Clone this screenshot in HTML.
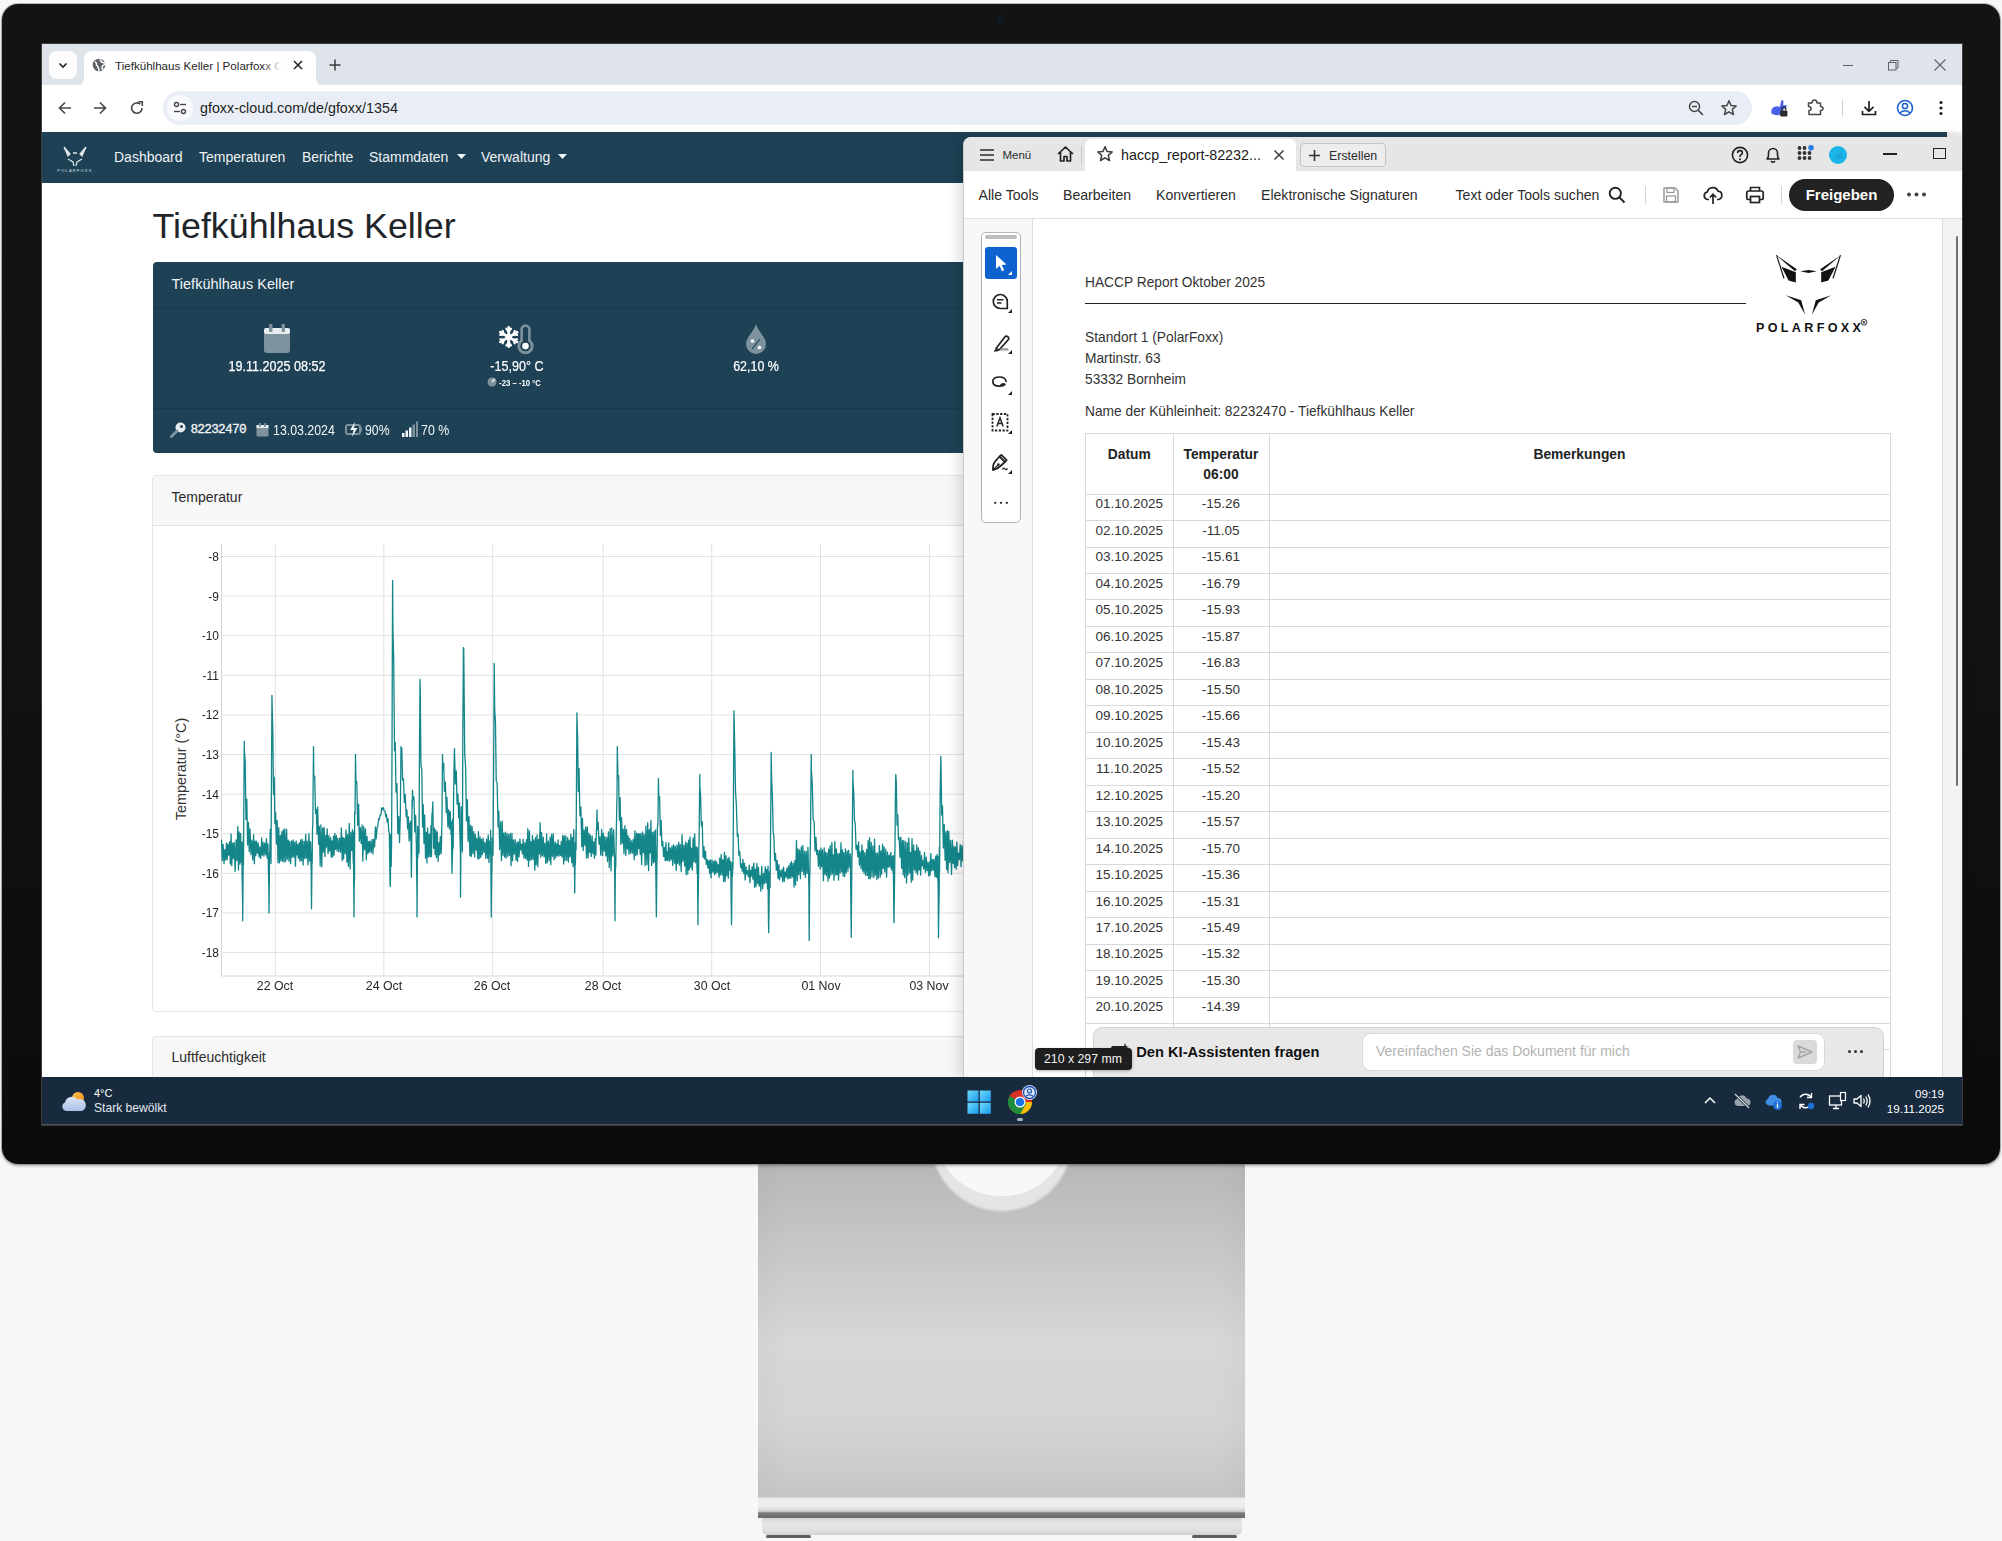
<!DOCTYPE html><html><head><meta charset="utf-8"><style>
html,body{margin:0;padding:0;}
body{width:2002px;height:1541px;position:relative;overflow:hidden;background:#f7f7f7;font-family:"Liberation Sans", sans-serif;}
.r{position:absolute;}
.t{position:absolute;white-space:nowrap;}
</style></head><body><div class="r" style="left:758px;top:1150px;width:487px;height:350px;background:linear-gradient(180deg,#b4b5b6 0%,#c4c5c6 25%,#d6d7d8 55%,#d3d4d5 78%,#c4c5c6 100%);"></div><div class="r" style="left:758px;top:1150px;width:487px;height:350px;background:linear-gradient(90deg,rgba(0,0,0,0.025) 0%,rgba(0,0,0,0) 6%,rgba(0,0,0,0) 94%,rgba(0,0,0,0.025) 100%);"></div><div class="r" style="left:930.5px;top:1069.5px;width:141px;height:141px;border-radius:50%;background:radial-gradient(circle at 50% 45%, #e9e9e9 0%, #e4e4e4 80%, #d2d3d4 96%, rgba(200,200,200,0) 100%);filter:blur(1.2px);"></div><div class="r" style="left:934.2px;top:1061.6px;width:134.8px;height:134.8px;border-radius:50%;background:#f8f8f8;filter:blur(0.7px);"></div><div class="r" style="left:758.00px;top:1497.00px;width:487.00px;height:20.50px;background:linear-gradient(180deg,#d6d7d8 0%,#eeeff0 12%,#eceded 45%,#d0d1d2 68%,#7a7b7c 76%,#6a6b6d 100%);"></div><div class="r" style="left:761.50px;top:1517.50px;width:480.00px;height:17.50px;background:linear-gradient(180deg,#d4d5d6 0%,#e6e7e8 35%,#dcdddf 80%,#cfd0d1 100%);border-radius:0 0 5px 5px;"></div><div class="r" style="left:766.00px;top:1534.50px;width:45.00px;height:3.00px;background:#5e5e5e;border-radius:2px;filter:blur(0.4px);"></div><div class="r" style="left:1192.00px;top:1534.50px;width:45.00px;height:3.00px;background:#5e5e5e;border-radius:2px;filter:blur(0.4px);"></div><div class="r" style="left:2px;top:4px;width:1998px;height:1160px;border-radius:16px;background:linear-gradient(180deg,#131313 0%,#111 60%,#0b0b0b 100%);box-shadow:0 0 0 1px rgba(120,120,120,0.5), 0 2px 3px rgba(0,0,0,0.3);"></div><div class="r" style="left:997px;top:15px;width:8px;height:8px;border-radius:50%;background:#0f1a22;"></div><div class="r" style="left:42.00px;top:44.00px;width:1920.00px;height:1081.00px;background:#fff;box-shadow:0 0 0 1px rgba(80,80,80,0.7);"></div><div class="r" style="left:42.00px;top:44.00px;width:1920.00px;height:42.00px;background:#dfe3ea;"></div><div class="r" style="left:49.00px;top:51.00px;width:28.00px;height:28.00px;background:#fdfdfe;border-radius:8px;"></div><svg class="r" style="left:57.00px;top:59.00px;" width="12" height="12" viewBox="0 0 12 12"><path d="M2.5 4.5 L6 8 L9.5 4.5" fill="none" stroke="#1f1f1f" stroke-width="1.6"/></svg><svg class="r" style="left:76px;top:50px;" width="250" height="36" viewBox="0 0 250 36"><path d="M0 36 Q8 36 8 28 L8 10 Q8 1 17 1 L231 1 Q240 1 240 10 L240 28 Q240 36 248 36 Z" fill="#fff"/></svg><svg class="r" style="left:92.00px;top:58.00px;" width="14" height="14" viewBox="0 0 14 14"><circle cx="7" cy="7" r="6.3" fill="#5f6368"/><path d="M3 3.5 Q5 5 4.5 7 Q6 8 6.5 10.5 Q7.5 12 6.5 13 M8.5 1.2 Q8 3 10 4 Q12.5 4.5 12.8 6.5 Q10.5 7 10 9.5 Q9.5 11.5 11.5 11" fill="none" stroke="#fff" stroke-width="1.5"/></svg><div class="t" style="left:115.00px;top:60.18px;width:172px;font-size:11.6px;line-height:11.6px;color:#1f1f1f;font-weight:400;text-align:left;font-family:'Liberation Sans', sans-serif;overflow:hidden;">Tiefkühlhaus Keller | Polarfoxx Cloud</div><div class="r" style="left:262.00px;top:52.00px;width:25.00px;height:28.00px;background:linear-gradient(90deg,rgba(255,255,255,0),#fff 80%);"></div><svg class="r" style="left:292.00px;top:59.00px;" width="12" height="12" viewBox="0 0 12 12"><path d="M2 2 L10 10 M10 2 L2 10" stroke="#1f1f1f" stroke-width="1.5"/></svg><svg class="r" style="left:328.00px;top:58.00px;" width="14" height="14" viewBox="0 0 14 14"><path d="M7 1.5 V12.5 M1.5 7 H12.5" stroke="#3c3c3c" stroke-width="1.5"/></svg><div class="r" style="left:1843.00px;top:64.50px;width:10.00px;height:1.00px;background:#5f6368;"></div><svg class="r" style="left:1887.00px;top:59.00px;" width="13" height="13" viewBox="0 0 13 13"><rect x="1.5" y="3.5" width="7.5" height="7.5" fill="none" stroke="#5f6368" stroke-width="1"/><path d="M3.5 3.5 V1.5 H11 V9 H9" fill="none" stroke="#5f6368" stroke-width="1"/></svg><svg class="r" style="left:1933.00px;top:58.00px;" width="14" height="14" viewBox="0 0 14 14"><path d="M1.5 1.5 L12.5 12.5 M12.5 1.5 L1.5 12.5" stroke="#5f6368" stroke-width="1.1"/></svg><div class="r" style="left:42.00px;top:85.00px;width:1920.00px;height:47.00px;background:#fff;"></div><svg class="r" style="left:57.00px;top:100.00px;" width="16" height="16" viewBox="0 0 16 16"><path d="M14 8 H2.5 M8 2.5 L2.5 8 L8 13.5" fill="none" stroke="#474747" stroke-width="1.6"/></svg><svg class="r" style="left:92.00px;top:100.00px;" width="16" height="16" viewBox="0 0 16 16"><path d="M2 8 H13.5 M8 2.5 L13.5 8 L8 13.5" fill="none" stroke="#474747" stroke-width="1.6"/></svg><svg class="r" style="left:129.00px;top:100.00px;" width="16" height="16" viewBox="0 0 16 16"><path d="M13 8 A5.2 5.2 0 1 1 11.3 4.2" fill="none" stroke="#474747" stroke-width="1.6"/><path d="M9.2 1.8 H13.3 V5.9" fill="none" stroke="#474747" stroke-width="1.6"/></svg><div class="r" style="left:163.00px;top:91.00px;width:1589.00px;height:34.00px;background:#e9eef6;border-radius:17px;"></div><div class="r" style="left:167.00px;top:95.00px;width:26.00px;height:26.00px;background:#f8fafd;border-radius:13px;"></div><svg class="r" style="left:172.00px;top:100.00px;" width="16" height="16" viewBox="0 0 16 16"><circle cx="4.5" cy="4.5" r="2" fill="none" stroke="#474747" stroke-width="1.4"/><path d="M8 4.5 H14" stroke="#474747" stroke-width="1.4"/><circle cx="11.5" cy="11.5" r="2" fill="none" stroke="#474747" stroke-width="1.4"/><path d="M2 11.5 H8" stroke="#474747" stroke-width="1.4"/></svg><div class="t" style="left:200.00px;top:100.89px;width:800px;font-size:14.3px;line-height:14.3px;color:#1f1f1f;font-weight:400;text-align:left;font-family:'Liberation Sans', sans-serif;">gfoxx-cloud.com/de/gfoxx/1354</div><svg class="r" style="left:1688.00px;top:100.00px;" width="17" height="17" viewBox="0 0 17 17"><circle cx="6.5" cy="6.5" r="5" fill="none" stroke="#474747" stroke-width="1.5"/><path d="M4 6.5 H9" stroke="#474747" stroke-width="1.5"/><path d="M10.3 10.3 L15 15" stroke="#474747" stroke-width="1.7"/></svg><svg class="r" style="left:1720.00px;top:99.00px;" width="18" height="18" viewBox="0 0 18 18"><path d="M9 1.8 L11.1 6.6 L16.2 7 L12.3 10.4 L13.5 15.5 L9 12.8 L4.5 15.5 L5.7 10.4 L1.8 7 L6.9 6.6 Z" fill="none" stroke="#474747" stroke-width="1.5" stroke-linejoin="round"/></svg><svg class="r" style="left:1769.00px;top:98.00px;" width="20" height="20" viewBox="0 0 20 20"><path d="M2.5 15.5 Q1.5 10.5 5.5 8.8 Q8.5 7.6 10.8 9 L12.2 3.2 Q13.2 1.2 14.4 2.8 L14.3 7.6 Q17.2 6 18 8.2 Q16.8 10.2 14.3 11.2 Q14.8 14.5 11.5 16.5 Q7 18.5 2.5 15.5 Z" fill="#4a63e6"/><rect x="11.2" y="12.6" width="7.2" height="5.8" rx="1" fill="#2b2b2b"/><path d="M12.8 12.6 V11.2 A2 2 0 0 1 16.8 11.2 V12.6" fill="none" stroke="#2b2b2b" stroke-width="1.3"/></svg><svg class="r" style="left:1806.00px;top:98.00px;" width="19" height="19" viewBox="0 0 19 19"><path d="M2.5 5 H6 Q6 2 8.5 2 Q11 2 11 5 H14.5 V8.5 Q17 8.5 17 10.5 Q17 12.5 14.5 12.5 V16.5 H3 V12.5 Q5 12.5 5 10.5 Q5 8.5 2.5 8.5 Z" fill="none" stroke="#474747" stroke-width="1.5" stroke-linejoin="round"/></svg><div class="r" style="left:1841.50px;top:100.00px;width:1.00px;height:16.00px;background:#c7d0dc;"></div><svg class="r" style="left:1860.00px;top:99.00px;" width="18" height="18" viewBox="0 0 18 18"><path d="M9 2 V12 M4.5 7.8 L9 12.3 L13.5 7.8" fill="none" stroke="#1f1f1f" stroke-width="1.7"/><path d="M2.5 12 V15.5 H15.5 V12" fill="none" stroke="#1f1f1f" stroke-width="1.7"/></svg><svg class="r" style="left:1896.00px;top:99.00px;" width="18" height="18" viewBox="0 0 18 18"><circle cx="9" cy="9" r="7.5" fill="none" stroke="#1a5fd0" stroke-width="1.6"/><circle cx="9" cy="7" r="2.6" fill="none" stroke="#1a5fd0" stroke-width="1.5"/><path d="M4 13.8 Q9 9.8 14 13.8" fill="none" stroke="#1a5fd0" stroke-width="1.5"/></svg><svg class="r" style="left:1937.00px;top:99.00px;" width="8" height="18" viewBox="0 0 8 18"><circle cx="4" cy="3.5" r="1.6" fill="#1f1f1f"/><circle cx="4" cy="9" r="1.6" fill="#1f1f1f"/><circle cx="4" cy="14.5" r="1.6" fill="#1f1f1f"/></svg><div class="r" style="left:42.00px;top:132.00px;width:1920.00px;height:945.00px;background:#fff;"></div><div class="r" style="left:1947.00px;top:132.00px;width:15.00px;height:945.00px;background:#f1f1f1;"></div><div class="r" style="left:42.00px;top:132.00px;width:1905.00px;height:51.00px;background:#1e4155;"></div><svg class="r" style="left:57.00px;top:145.00px;" width="36" height="28" viewBox="0 0 36 28"><g fill="none" stroke="#dfe7ec" stroke-width="1.2">
<path d="M7 2 L13 9 L11 11 Z" fill="#dfe7ec"/><path d="M29 2 L23 9 L25 11 Z" fill="#dfe7ec"/>
<path d="M16 8 H20" stroke-width="1.5"/>
<path d="M11 14 L16 17 L17 21" /><path d="M25 14 L20 17 L19 21"/>
</g><text x="18" y="26.5" font-size="4" fill="#dfe7ec" text-anchor="middle" font-family="Liberation Sans" letter-spacing="1.2">POLARFOXX</text></svg><div class="t" style="left:114.00px;top:150.15px;width:800px;font-size:14px;line-height:14px;color:#eef3f6;font-weight:400;text-align:left;font-family:'Liberation Sans', sans-serif;">Dashboard</div><div class="t" style="left:199.00px;top:150.15px;width:800px;font-size:14px;line-height:14px;color:#eef3f6;font-weight:400;text-align:left;font-family:'Liberation Sans', sans-serif;">Temperaturen</div><div class="t" style="left:302.00px;top:150.15px;width:800px;font-size:14px;line-height:14px;color:#eef3f6;font-weight:400;text-align:left;font-family:'Liberation Sans', sans-serif;">Berichte</div><div class="t" style="left:369.00px;top:150.15px;width:800px;font-size:14px;line-height:14px;color:#eef3f6;font-weight:400;text-align:left;font-family:'Liberation Sans', sans-serif;">Stammdaten</div><svg class="r" style="left:457.00px;top:154.00px;" width="9" height="5" viewBox="0 0 9 5"><path d="M0 0 H9 L4.5 5 Z" fill="#eef3f6"/></svg><div class="t" style="left:481.00px;top:150.15px;width:800px;font-size:14px;line-height:14px;color:#eef3f6;font-weight:400;text-align:left;font-family:'Liberation Sans', sans-serif;">Verwaltung</div><svg class="r" style="left:558.00px;top:154.00px;" width="9" height="5" viewBox="0 0 9 5"><path d="M0 0 H9 L4.5 5 Z" fill="#eef3f6"/></svg><div class="t" style="left:152.50px;top:209.19px;width:800px;font-size:35.8px;line-height:35.8px;color:#212529;font-weight:400;text-align:left;font-family:'Liberation Sans', sans-serif;">Tiefkühlhaus Keller</div><div class="r" style="left:152.50px;top:262.00px;width:840.00px;height:190.50px;background:#1e4155;border-radius:4px;"></div><div class="t" style="left:171.50px;top:276.72px;width:800px;font-size:14.5px;line-height:14.5px;color:#f2f5f7;font-weight:400;text-align:left;font-family:'Liberation Sans', sans-serif;">Tiefkühlhaus Keller</div><div class="r" style="left:152.50px;top:306.50px;width:840.00px;height:1.00px;background:#1a394b;"></div><div class="r" style="left:152.50px;top:407.50px;width:840.00px;height:1.00px;background:#1a394b;"></div><svg class="r" style="left:263.00px;top:323.00px;" width="28" height="31" viewBox="0 0 28 31"><rect x="1" y="5" width="26" height="25" rx="3" fill="#7e929e"/><rect x="1" y="5" width="26" height="6" rx="2" fill="#e8edf0"/><rect x="6" y="1" width="3.5" height="8" rx="1" fill="#7e929e"/><rect x="18.5" y="1" width="3.5" height="8" rx="1" fill="#7e929e"/></svg><div class="t" style="left:177.30px;top:359.15px;width:200px;font-size:14px;line-height:14px;color:#ffffff;font-weight:400;text-align:center;font-family:'Liberation Sans', sans-serif;-webkit-text-stroke:0.25px #fff;transform:scaleX(0.898);transform-origin:50% 50%;">19.11.2025 08:52</div><svg class="r" style="left:498.00px;top:323.00px;" width="37" height="33" viewBox="0 0 37 33"><path d="M10.70 14.10 L10.70 4.50" stroke="#fff" stroke-width="2.8" stroke-linecap="round"/><path d="M10.70 8.53 L8.39 5.77" stroke="#fff" stroke-width="2.2" stroke-linecap="round"/><path d="M10.70 8.53 L13.01 5.77" stroke="#fff" stroke-width="2.2" stroke-linecap="round"/><path d="M10.70 14.10 L2.39 9.30" stroke="#fff" stroke-width="2.8" stroke-linecap="round"/><path d="M5.88 11.32 L2.33 11.94" stroke="#fff" stroke-width="2.2" stroke-linecap="round"/><path d="M5.88 11.32 L4.65 7.93" stroke="#fff" stroke-width="2.2" stroke-linecap="round"/><path d="M10.70 14.10 L2.39 18.90" stroke="#fff" stroke-width="2.8" stroke-linecap="round"/><path d="M5.88 16.88 L4.65 20.27" stroke="#fff" stroke-width="2.2" stroke-linecap="round"/><path d="M5.88 16.88 L2.33 16.26" stroke="#fff" stroke-width="2.2" stroke-linecap="round"/><path d="M10.70 14.10 L10.70 23.70" stroke="#fff" stroke-width="2.8" stroke-linecap="round"/><path d="M10.70 19.67 L13.01 22.43" stroke="#fff" stroke-width="2.2" stroke-linecap="round"/><path d="M10.70 19.67 L8.39 22.43" stroke="#fff" stroke-width="2.2" stroke-linecap="round"/><path d="M10.70 14.10 L19.01 18.90" stroke="#fff" stroke-width="2.8" stroke-linecap="round"/><path d="M15.52 16.88 L19.07 16.26" stroke="#fff" stroke-width="2.2" stroke-linecap="round"/><path d="M15.52 16.88 L16.75 20.27" stroke="#fff" stroke-width="2.2" stroke-linecap="round"/><path d="M10.70 14.10 L19.01 9.30" stroke="#fff" stroke-width="2.8" stroke-linecap="round"/><path d="M15.52 11.32 L16.75 7.93" stroke="#fff" stroke-width="2.2" stroke-linecap="round"/><path d="M15.52 11.32 L19.07 11.94" stroke="#fff" stroke-width="2.2" stroke-linecap="round"/><circle cx="10.7" cy="14.1" r="3.2" fill="#fff"/><path d="M22.3 6.5 A5.2 5.2 0 0 1 32.7 6.5 V17 A8.1 8.1 0 1 1 22.3 17 Z" fill="#7e929e"/><path d="M24.9 6.5 A2.6 2.6 0 0 1 30.1 6.5 V18.6 A5.2 5.2 0 1 1 24.9 18.6 Z" fill="#1e4155"/><circle cx="27.5" cy="23.1" r="3.3" fill="#fff"/></svg><div class="t" style="left:416.50px;top:359.15px;width:200px;font-size:14px;line-height:14px;color:#ffffff;font-weight:400;text-align:center;font-family:'Liberation Sans', sans-serif;-webkit-text-stroke:0.2px #fff;transform:scaleX(0.9);transform-origin:50% 50%;">-15,90° C</div><svg class="r" style="left:487.00px;top:377.00px;" width="10" height="10" viewBox="0 0 10 10"><circle cx="5" cy="5" r="4.5" fill="#7e929e"/><path d="M5 5 L8 2" stroke="#fff" stroke-width="1.2"/></svg><div class="t" style="left:469.80px;top:378.55px;width:100px;font-size:8.8px;line-height:8.8px;color:#ffffff;font-weight:700;text-align:center;font-family:'Liberation Sans', sans-serif;transform:scaleX(0.88);transform-origin:50% 50%;">-23 – -10 °C</div><svg class="r" style="left:745.00px;top:323.00px;" width="22" height="31" viewBox="0 0 22 31"><path d="M11 1 Q12 5 18 13 Q21 17 21 21 A10 10 0 0 1 1 21 Q1 17 4 13 Q10 5 11 1 Z" fill="#7e929e"/><circle cx="7.5" cy="18" r="1.8" fill="#fff"/><circle cx="14.5" cy="24.5" r="1.8" fill="#fff"/><path d="M15 16 L7 26" stroke="#1e4155" stroke-width="1.2"/></svg><div class="t" style="left:656.00px;top:359.15px;width:200px;font-size:14px;line-height:14px;color:#ffffff;font-weight:400;text-align:center;font-family:'Liberation Sans', sans-serif;-webkit-text-stroke:0.2px #fff;transform:scaleX(0.89);transform-origin:50% 50%;">62,10 %</div><svg class="r" style="left:170.00px;top:422.00px;" width="16" height="16" viewBox="0 0 16 16"><circle cx="10.5" cy="5.5" r="5" fill="#e6ebee"/><circle cx="11.5" cy="4.5" r="1.5" fill="#1e4155"/><path d="M7 9 L1.5 14.5" stroke="#7e929e" stroke-width="3" stroke-linecap="round"/></svg><div class="t" style="left:190.40px;top:424.16px;width:800px;font-size:12.8px;line-height:12.8px;color:#f2f5f7;font-weight:400;text-align:left;font-family:'Liberation Mono', monospace;letter-spacing:-0.75px;-webkit-text-stroke:0.3px #f2f5f7;">82232470</div><svg class="r" style="left:256.00px;top:423.00px;" width="13" height="14" viewBox="0 0 13 14"><rect x="0.5" y="2" width="12" height="11.5" rx="1.5" fill="#7e929e"/><rect x="0.5" y="2" width="12" height="3" fill="#e6ebee"/><rect x="3" y="0" width="1.8" height="4" fill="#7e929e"/><rect x="8.2" y="0" width="1.8" height="4" fill="#7e929e"/></svg><div class="t" style="left:272.50px;top:423.15px;width:800px;font-size:14px;line-height:14px;color:#f2f5f7;font-weight:400;text-align:left;font-family:'Liberation Sans', sans-serif;transform:scaleX(0.883);transform-origin:0 50%;">13.03.2024</div><svg class="r" style="left:345.00px;top:422.00px;" width="18" height="15" viewBox="0 0 18 15"><rect x="1" y="3" width="14" height="9" rx="2" fill="none" stroke="#7e929e" stroke-width="2"/><rect x="15" y="5.5" width="2" height="4" fill="#7e929e"/><path d="M10 0 L5 8 H8.5 L7 15 L12.5 6 H9 Z" fill="#f2f5f7"/></svg><div class="t" style="left:365.20px;top:423.15px;width:800px;font-size:14px;line-height:14px;color:#f2f5f7;font-weight:400;text-align:left;font-family:'Liberation Sans', sans-serif;transform:scaleX(0.877);transform-origin:0 50%;">90%</div><svg class="r" style="left:401.00px;top:421.00px;" width="17" height="16" viewBox="0 0 17 16"><rect x="1" y="12" width="2.5" height="4" fill="#f2f5f7"/><rect x="4.5" y="9.5" width="2.5" height="6.5" fill="#f2f5f7"/><rect x="8" y="6.5" width="2.5" height="9.5" fill="#f2f5f7"/><rect x="11.5" y="3.5" width="2.5" height="12.5" fill="#7e929e"/><rect x="15" y="0.5" width="2" height="15.5" fill="#7e929e"/></svg><div class="t" style="left:421.10px;top:423.15px;width:800px;font-size:14px;line-height:14px;color:#f2f5f7;font-weight:400;text-align:left;font-family:'Liberation Sans', sans-serif;transform:scaleX(0.883);transform-origin:0 50%;">70 %</div><div class="r" style="left:152.00px;top:475.00px;width:840.00px;height:537.00px;background:#fff;border:1px solid #e3e3e3;border-radius:4px;box-sizing:border-box;"></div><div class="r" style="left:153.00px;top:476.00px;width:838.00px;height:49.50px;background:#f7f7f7;border-bottom:1px solid #e3e3e3;border-radius:4px 4px 0 0;box-sizing:border-box;"></div><div class="t" style="left:171.50px;top:490.15px;width:800px;font-size:14px;line-height:14px;color:#2b2b2b;font-weight:400;text-align:left;font-family:'Liberation Sans', sans-serif;">Temperatur</div><div class="r" style="left:152.00px;top:1035.50px;width:840.00px;height:60.00px;background:#f7f7f7;border:1px solid #e3e3e3;border-radius:4px;box-sizing:border-box;"></div><div class="t" style="left:171.50px;top:1050.15px;width:800px;font-size:14px;line-height:14px;color:#2b2b2b;font-weight:400;text-align:left;font-family:'Liberation Sans', sans-serif;">Luftfeuchtigkeit</div><svg class="r" style="left:0;top:0;" width="2002" height="1100" viewBox="0 0 2002 1100"><defs><clipPath id="cc"><rect x="221" y="530" width="742.5" height="460"/></clipPath></defs><g clip-path="url(#cc)"><path d="M221.5 556.5 H963.5" stroke="#e2e2e2" stroke-width="1"/><path d="M221.5 596.1 H963.5" stroke="#e2e2e2" stroke-width="1"/><path d="M221.5 635.7 H963.5" stroke="#e2e2e2" stroke-width="1"/><path d="M221.5 675.3 H963.5" stroke="#e2e2e2" stroke-width="1"/><path d="M221.5 714.9 H963.5" stroke="#e2e2e2" stroke-width="1"/><path d="M221.5 754.5 H963.5" stroke="#e2e2e2" stroke-width="1"/><path d="M221.5 794.1 H963.5" stroke="#e2e2e2" stroke-width="1"/><path d="M221.5 833.7 H963.5" stroke="#e2e2e2" stroke-width="1"/><path d="M221.5 873.3 H963.5" stroke="#e2e2e2" stroke-width="1"/><path d="M221.5 912.9 H963.5" stroke="#e2e2e2" stroke-width="1"/><path d="M221.5 952.5 H963.5" stroke="#e2e2e2" stroke-width="1"/><path d="M275.4 544 V976" stroke="#e2e2e2" stroke-width="1"/><path d="M383.8 544 V976" stroke="#e2e2e2" stroke-width="1"/><path d="M492.4 544 V976" stroke="#e2e2e2" stroke-width="1"/><path d="M603.2 544 V976" stroke="#e2e2e2" stroke-width="1"/><path d="M711.7 544 V976" stroke="#e2e2e2" stroke-width="1"/><path d="M820.5 544 V976" stroke="#e2e2e2" stroke-width="1"/><path d="M929.4 544 V976" stroke="#e2e2e2" stroke-width="1"/><path d="M221.5 544 V976 H963.5" stroke="#d6d6d6" stroke-width="1" fill="none"/><path d="M221.50 839.7 L222.29 860.6 L223.10 844.3 L224.03 863.5 L224.82 849.6 L225.62 859.9 L226.45 842.9 L227.15 859.7 L227.96 844.0 L228.80 855.1 L229.69 841.7 L230.36 864.1 L231.10 833.9 L231.78 865.8 L232.67 843.1 L233.53 858.5 L234.19 842.3 L235.14 871.4 L236.08 840.0 L236.93 860.6 L237.76 826.5 L238.46 870.1 L239.11 831.9 L239.92 864.3 L240.59 833.5 L241.30 862.2 L242.00 842.1 L242.02 872.4 L242.68 904.0 L242.70 920.8 L243.40 835.7 L243.47 865.2 L244.25 741.3 L244.40 750.5 L245.15 760.6 L245.96 819.5 L246.80 799.1 L247.60 845.1 L248.45 822.4 L249.23 851.7 L249.97 828.8 L250.92 854.6 L251.87 840.2 L252.77 859.9 L253.63 834.6 L254.37 863.7 L255.09 841.2 L255.83 855.7 L256.50 841.2 L257.38 853.1 L258.15 842.9 L259.06 857.2 L259.82 846.9 L260.76 858.4 L261.66 838.0 L262.31 855.2 L263.03 842.4 L263.95 856.1 L264.74 842.8 L265.68 854.7 L266.45 838.7 L267.13 858.0 L267.96 844.0 L268.30 862.6 L268.85 890.6 L269.00 912.9 L269.58 852.4 L269.70 858.8 L270.25 829.4 L271.00 863.5 L271.94 695.3 L272.00 699.1 L272.82 732.3 L273.51 794.6 L274.23 777.1 L274.91 823.8 L275.58 812.3 L276.47 844.2 L277.17 820.4 L277.99 862.6 L278.77 827.6 L279.48 862.9 L280.35 835.4 L281.04 860.7 L281.88 831.6 L282.57 861.2 L283.34 829.8 L284.06 862.0 L284.79 828.9 L285.73 861.4 L286.62 829.4 L287.36 859.2 L288.28 840.2 L288.99 861.3 L289.76 841.3 L290.67 863.7 L291.51 840.9 L292.19 857.2 L293.13 840.0 L293.85 857.0 L294.58 842.1 L295.46 866.2 L296.21 841.0 L296.95 854.8 L297.62 844.5 L298.29 858.1 L299.12 842.7 L299.84 861.1 L300.67 840.0 L301.43 860.7 L302.22 839.5 L303.16 864.9 L303.95 841.5 L304.78 858.6 L305.69 834.5 L306.39 858.3 L307.09 841.2 L308.01 864.8 L308.90 833.5 L309.63 861.0 L310.34 841.7 L310.80 855.2 L311.21 870.9 L311.50 908.9 L312.14 842.5 L312.20 863.6 L312.50 829.7 L312.85 822.9 L313.50 746.6 L313.78 775.8 L314.70 776.2 L315.53 813.3 L316.31 809.4 L316.99 834.3 L317.65 807.0 L318.59 844.3 L319.31 826.4 L320.17 865.9 L320.90 824.8 L321.80 866.8 L322.62 828.1 L323.36 852.1 L324.06 827.3 L324.93 856.6 L325.60 835.7 L326.32 847.0 L327.14 828.8 L328.04 853.6 L328.88 835.6 L329.61 851.0 L330.54 837.7 L331.25 857.2 L331.90 840.8 L332.63 856.9 L333.42 836.4 L334.09 855.0 L334.79 833.3 L335.55 849.3 L336.37 835.5 L337.06 851.0 L337.82 838.5 L338.74 851.7 L339.68 838.2 L340.53 852.1 L341.38 827.8 L342.21 860.7 L342.90 837.3 L343.56 858.8 L344.22 838.2 L345.14 853.8 L346.00 829.9 L346.94 862.3 L347.60 834.3 L348.44 866.2 L349.23 823.5 L350.10 869.0 L350.85 832.2 L351.80 850.4 L352.47 829.6 L353.28 863.3 L353.30 831.7 L354.00 916.9 L354.15 886.7 L354.50 878.2 L354.70 812.0 L355.07 814.0 L355.50 754.5 L355.95 782.7 L356.81 781.8 L357.69 825.5 L358.62 804.2 L359.37 841.2 L360.23 827.6 L361.15 843.4 L362.06 824.9 L362.84 861.1 L363.72 826.6 L364.63 849.9 L365.46 829.0 L366.29 859.8 L367.06 836.5 L367.88 853.8 L368.71 841.4 L369.39 852.1 L370.23 841.2 L371.18 852.7 L372.09 839.3 L372.96 853.9 L373.73 839.3 L374.60 846.9 L375.42 826.9 L376.20 838.9 L377.11 827.4 L377.78 826.3 L378.66 818.7 L379.32 819.5 L380.15 814.9 L380.94 815.0 L381.66 807.9 L382.52 809.6 L383.32 807.7 L384.15 810.6 L385.08 811.5 L385.80 817.0 L386.46 814.4 L387.20 822.0 L388.05 818.6 L388.76 831.5 L389.30 832.1 L389.46 844.5 L390.00 881.2 L390.39 886.4 L390.70 834.3 L391.23 866.3 L391.60 838.0 L392.02 749.8 L392.60 580.3 L392.93 630.0 L393.68 657.9 L394.53 750.7 L395.24 742.5 L396.02 792.0 L396.91 783.7 L397.84 833.7 L398.75 816.4 L399.52 842.6 L400.00 824.7 L400.34 816.0 L401.00 746.6 L401.09 751.9 L401.78 748.1 L402.58 780.0 L403.48 779.0 L404.38 802.7 L405.24 794.5 L406.18 816.6 L406.91 809.8 L407.61 829.0 L408.40 816.9 L409.13 841.0 L409.85 823.3 L410.62 839.3 L410.70 821.2 L411.40 877.3 L411.46 853.9 L411.50 872.5 L412.10 799.8 L412.26 807.2 L412.50 790.1 L413.00 800.2 L413.90 796.9 L414.85 831.9 L415.63 815.2 L416.30 843.0 L416.96 893.6 L417.00 916.9 L417.70 826.3 L417.88 857.5 L418.54 832.2 L419.00 853.2 L419.40 764.4 L420.00 679.3 L420.22 687.3 L420.96 765.2 L421.85 770.5 L422.51 826.9 L423.20 804.6 L423.98 843.5 L424.64 814.9 L425.54 858.2 L426.26 832.5 L426.95 862.9 L427.62 827.9 L428.46 856.8 L429.24 833.8 L430.08 857.1 L430.93 825.7 L431.50 856.6 L431.82 816.8 L432.50 809.9 L432.76 802.0 L433.61 848.3 L434.32 828.1 L435.11 854.5 L435.82 830.0 L436.47 857.7 L437.26 831.8 L438.13 861.4 L438.83 842.8 L439.56 854.8 L440.32 836.4 L441.18 853.7 L441.50 844.0 L441.98 818.7 L442.50 754.5 L442.82 769.5 L443.69 763.1 L444.46 791.4 L445.35 782.1 L446.27 812.7 L446.95 797.4 L447.88 826.8 L448.74 809.7 L449.43 828.9 L450.22 811.6 L451.06 834.4 L451.30 821.5 L451.98 871.4 L452.00 873.3 L452.70 847.1 L452.74 819.1 L453.20 848.2 L453.56 798.7 L454.20 758.5 L454.48 748.6 L455.37 783.9 L456.30 771.0 L457.09 804.0 L457.93 793.8 L458.64 817.9 L459.51 802.8 L459.80 832.0 L460.41 852.1 L460.50 897.1 L461.20 806.8 L461.25 839.7 L462.11 810.4 L462.40 851.8 L462.83 732.3 L463.40 647.6 L463.75 648.2 L464.69 753.4 L465.64 767.8 L466.45 820.9 L467.33 799.7 L468.08 841.5 L469.00 816.7 L469.91 855.8 L470.66 825.1 L471.34 856.6 L472.12 826.7 L472.94 853.6 L473.82 831.5 L474.61 857.0 L475.27 834.3 L476.16 849.9 L476.83 838.6 L477.72 858.9 L478.43 831.6 L479.18 858.7 L480.06 837.0 L480.75 857.4 L481.45 839.3 L482.25 854.6 L483.12 838.1 L484.02 852.5 L484.88 842.5 L485.81 858.4 L486.61 839.1 L487.55 858.2 L488.22 834.8 L488.94 862.5 L489.75 841.1 L490.48 853.8 L490.60 830.1 L491.30 916.9 L491.35 899.7 L492.00 858.1 L492.19 837.9 L493.00 855.1 L493.20 828.3 L493.90 726.4 L494.20 663.4 L494.72 710.4 L495.47 722.1 L496.23 780.6 L497.13 783.1 L498.05 826.8 L498.77 811.1 L499.67 849.5 L500.61 821.9 L501.42 860.6 L502.24 821.1 L502.95 855.3 L503.76 833.1 L504.56 856.9 L505.39 832.2 L506.05 858.2 L506.99 833.4 L507.80 856.4 L508.57 834.5 L509.46 855.4 L510.28 833.5 L511.08 865.8 L511.93 833.1 L512.60 860.8 L513.41 840.0 L514.19 854.2 L515.12 839.5 L516.05 860.1 L516.78 842.6 L517.57 861.4 L518.26 841.6 L519.04 856.6 L519.94 839.0 L520.86 850.2 L521.65 844.5 L522.40 853.9 L523.10 839.1 L523.94 858.0 L524.87 842.9 L525.56 858.4 L526.44 839.7 L527.10 860.1 L527.80 828.7 L528.52 866.6 L529.38 831.0 L530.12 860.5 L530.88 841.6 L531.72 859.6 L532.40 835.5 L533.27 859.2 L533.95 840.0 L534.76 870.3 L535.48 837.6 L536.19 864.7 L537.00 834.9 L537.78 866.7 L538.55 839.4 L539.32 853.9 L540.13 822.7 L540.83 857.2 L541.54 832.4 L542.38 855.6 L543.22 837.1 L544.03 856.8 L544.93 843.1 L545.77 863.5 L546.67 833.9 L547.39 862.7 L548.27 841.1 L549.16 860.8 L550.08 837.1 L550.82 864.8 L551.57 834.4 L552.50 856.4 L553.21 833.8 L554.16 859.7 L555.08 841.9 L555.77 857.8 L556.49 843.8 L557.36 855.5 L558.08 839.8 L558.76 856.3 L559.66 845.4 L560.44 855.4 L561.33 841.3 L562.01 856.9 L562.79 835.3 L563.64 864.1 L564.30 836.0 L565.01 860.5 L565.86 836.0 L566.78 860.4 L567.72 837.6 L568.41 862.1 L569.21 840.1 L570.09 856.9 L570.89 834.5 L571.75 862.7 L572.45 837.3 L573.12 866.6 L573.80 829.5 L574.00 857.6 L574.47 858.0 L574.70 893.1 L575.28 842.5 L575.40 864.2 L576.00 830.4 L576.09 849.8 L576.91 712.8 L577.00 718.9 L577.60 735.9 L578.31 791.4 L579.02 768.3 L579.92 815.8 L580.87 807.1 L581.79 846.4 L582.47 818.3 L583.14 850.6 L584.08 829.8 L584.87 845.3 L585.75 827.1 L586.49 858.1 L587.28 826.8 L588.09 857.8 L588.87 833.2 L589.70 852.4 L590.35 835.1 L591.21 856.4 L592.11 836.0 L592.82 853.6 L593.61 842.0 L594.48 858.3 L595.25 838.7 L595.96 855.0 L596.00 843.2 L596.66 825.9 L597.00 809.9 L597.46 829.6 L598.12 822.5 L599.03 844.1 L599.92 837.0 L600.79 855.2 L601.69 829.5 L602.53 855.7 L603.30 833.2 L604.13 851.3 L604.93 836.6 L605.88 855.9 L606.77 837.4 L607.50 861.6 L608.42 831.8 L609.30 867.6 L610.18 828.6 L611.07 870.7 L611.84 827.9 L612.76 856.0 L613.68 830.0 L614.30 851.9 L614.54 856.4 L615.00 920.8 L615.42 856.2 L615.70 868.0 L616.30 832.4 L617.07 790.6 L617.30 746.6 L617.93 777.1 L618.61 775.7 L619.36 820.0 L620.15 797.6 L620.80 844.6 L621.56 817.4 L622.40 843.3 L623.24 829.2 L623.96 853.7 L624.89 825.6 L625.74 855.6 L626.49 829.3 L627.34 849.0 L628.16 835.9 L628.97 854.1 L629.74 838.4 L630.69 853.3 L631.53 840.8 L632.39 853.1 L633.27 839.2 L634.21 859.8 L634.87 831.0 L635.70 855.6 L636.58 833.2 L637.30 854.8 L638.07 833.3 L638.74 848.6 L639.45 833.9 L640.21 854.5 L640.89 833.4 L641.61 864.7 L642.54 832.0 L643.35 852.7 L644.15 834.4 L645.09 865.8 L645.91 826.2 L646.86 864.7 L647.70 822.7 L648.60 870.7 L649.27 829.5 L650.10 853.0 L650.98 820.4 L651.64 865.4 L652.57 832.5 L653.27 863.1 L654.06 831.3 L654.76 861.9 L655.56 830.0 L655.70 863.0 L656.39 916.9 L656.40 916.9 L657.06 846.2 L657.10 858.3 L657.40 827.6 L657.99 823.1 L658.40 778.3 L658.77 795.9 L659.58 796.7 L660.41 835.7 L661.17 820.5 L661.90 845.9 L662.75 841.4 L663.57 856.4 L664.30 847.5 L665.17 860.6 L665.91 842.5 L666.56 860.4 L667.28 851.6 L667.95 860.5 L668.64 842.9 L669.52 861.2 L670.29 848.0 L671.21 859.7 L672.08 845.9 L672.74 865.5 L673.69 844.8 L674.62 863.2 L675.30 846.5 L676.22 870.3 L677.00 844.8 L677.79 863.5 L678.73 842.5 L679.46 865.2 L680.26 844.6 L681.19 871.6 L682.06 834.7 L682.85 861.4 L683.79 845.2 L684.69 866.0 L685.52 842.0 L686.21 874.8 L687.04 843.2 L687.83 873.9 L688.54 840.2 L689.21 869.8 L690.01 836.8 L690.70 867.6 L691.48 848.2 L692.34 870.2 L693.12 837.9 L693.85 861.8 L694.68 833.8 L695.45 862.6 L696.33 847.0 L697.14 873.5 L697.30 847.8 L698.00 924.8 L698.09 901.0 L698.70 867.3 L698.80 846.2 L699.03 844.8 L699.80 774.3 L699.90 787.5 L700.62 795.7 L701.30 825.8 L702.22 821.7 L703.11 857.6 L703.95 846.7 L704.70 858.9 L705.43 851.1 L706.29 864.5 L707.11 859.3 L707.94 868.0 L708.78 860.3 L709.65 873.3 L710.36 860.0 L711.08 877.9 L712.03 859.8 L712.95 872.2 L713.87 861.3 L714.53 874.8 L715.20 860.3 L715.93 873.4 L716.71 861.9 L717.54 872.1 L718.22 864.6 L719.04 877.3 L719.71 858.2 L720.38 874.9 L721.24 854.5 L722.05 874.9 L722.89 859.9 L723.65 881.6 L724.45 852.2 L725.16 881.6 L725.91 855.6 L726.79 875.9 L727.69 858.8 L728.36 878.2 L729.05 857.2 L729.94 870.4 L730.78 861.3 L730.80 872.2 L731.50 924.8 L731.66 915.1 L732.20 862.8 L732.37 876.2 L733.00 865.1 L733.15 850.3 L733.88 722.1 L734.00 710.9 L734.77 748.8 L735.53 791.7 L736.38 805.1 L737.32 836.4 L738.07 834.0 L738.88 855.3 L739.76 851.5 L740.68 867.5 L741.46 863.9 L742.22 871.2 L742.90 859.3 L743.81 873.7 L744.49 863.4 L745.16 880.0 L745.98 867.0 L746.78 874.0 L747.63 870.7 L748.37 876.6 L749.26 865.2 L749.93 882.8 L750.64 870.4 L751.49 876.0 L752.17 866.7 L752.91 879.2 L753.77 863.1 L754.63 887.4 L755.37 869.1 L756.06 886.3 L756.82 863.4 L757.69 883.4 L758.45 867.3 L759.13 886.0 L759.99 875.6 L760.81 891.2 L761.74 866.4 L762.67 888.8 L763.60 873.5 L764.38 883.6 L765.27 866.8 L766.01 882.7 L766.75 869.3 L767.52 888.8 L768.00 866.2 L768.46 921.3 L768.70 932.7 L769.37 881.7 L769.40 871.7 L770.10 887.8 L770.20 873.4 L770.86 800.7 L771.20 752.5 L771.62 779.0 L772.38 795.3 L773.14 831.1 L773.91 837.4 L774.62 860.5 L775.44 853.3 L776.33 870.2 L777.14 860.3 L778.04 878.7 L778.86 864.6 L779.56 879.8 L780.44 871.0 L781.35 876.9 L782.09 869.5 L782.74 881.8 L783.55 867.1 L784.36 881.3 L785.18 871.9 L786.12 877.2 L786.97 868.1 L787.86 878.9 L788.53 865.9 L789.34 878.2 L790.23 863.5 L790.90 878.2 L791.58 861.5 L792.45 876.9 L793.37 863.4 L794.05 887.0 L794.89 860.3 L795.58 885.1 L796.45 840.5 L797.30 880.7 L798.02 848.9 L798.74 874.5 L799.62 849.8 L800.42 878.7 L801.30 846.8 L802.07 871.6 L802.82 845.4 L803.76 874.7 L804.61 851.2 L805.41 877.4 L806.22 851.3 L807.09 873.6 L807.95 847.4 L808.50 869.2 L808.88 887.4 L809.20 940.6 L809.65 879.2 L809.90 871.7 L810.20 850.2 L810.55 832.5 L811.20 754.5 L811.40 769.4 L812.30 785.7 L813.20 820.0 L814.10 821.3 L815.01 851.1 L815.95 837.3 L816.79 854.7 L817.60 850.1 L818.46 866.3 L819.35 850.5 L820.13 869.2 L820.91 848.0 L821.60 866.8 L822.47 850.0 L823.42 880.7 L824.18 848.0 L824.88 874.0 L825.59 852.2 L826.37 875.7 L827.11 852.9 L828.05 881.2 L828.72 849.2 L829.46 878.0 L830.14 845.7 L830.99 875.0 L831.87 842.5 L832.57 873.9 L833.24 854.8 L834.03 880.2 L834.86 841.4 L835.78 875.0 L836.44 848.9 L837.12 874.5 L837.83 853.9 L838.54 880.2 L839.26 853.5 L840.13 873.0 L840.96 842.7 L841.67 871.9 L842.38 849.8 L843.11 876.1 L843.82 852.7 L844.69 876.5 L845.44 848.9 L846.25 873.0 L847.15 851.1 L847.94 871.2 L848.67 850.3 L849.58 867.2 L850.50 853.9 L850.51 870.2 L851.20 932.7 L851.26 937.2 L851.90 857.7 L852.08 857.0 L852.90 770.3 L853.01 781.3 L853.81 794.3 L854.52 821.0 L855.19 823.0 L856.12 849.3 L857.01 845.5 L857.78 856.8 L858.59 841.8 L859.39 865.1 L860.12 851.9 L861.07 868.5 L861.92 844.9 L862.64 871.0 L863.29 850.6 L864.09 873.5 L864.85 852.6 L865.74 875.3 L866.60 849.4 L867.43 875.6 L868.13 840.7 L868.83 878.8 L869.57 837.7 L870.30 878.7 L871.21 842.5 L872.02 876.8 L872.86 846.0 L873.80 877.5 L874.53 839.1 L875.35 875.2 L876.04 853.1 L876.92 879.6 L877.57 853.0 L878.47 878.0 L879.37 845.3 L880.27 877.1 L880.94 851.0 L881.67 874.1 L882.54 844.2 L883.22 868.6 L884.01 846.8 L884.80 872.1 L885.74 849.2 L886.57 877.2 L887.47 852.0 L888.21 867.2 L889.10 854.8 L889.88 867.2 L890.80 852.3 L891.48 869.9 L892.38 856.2 L893.09 872.7 L893.30 855.7 L893.90 922.8 L894.00 920.8 L894.70 867.7 L894.71 852.2 L894.80 864.9 L895.41 797.3 L895.80 774.3 L896.31 782.0 L897.05 825.2 L897.79 814.7 L898.47 839.7 L899.21 837.6 L900.00 857.3 L900.86 837.2 L901.62 868.3 L902.48 840.4 L903.16 874.9 L903.93 840.7 L904.71 877.6 L905.65 841.6 L906.55 883.0 L907.40 843.0 L908.05 874.8 L908.82 837.9 L909.68 872.8 L910.40 852.5 L911.22 882.3 L912.01 838.6 L912.66 880.1 L913.61 845.0 L914.50 870.0 L915.21 850.8 L916.05 872.4 L916.78 844.9 L917.55 874.7 L918.36 847.9 L919.10 870.0 L919.85 851.0 L920.62 875.2 L921.47 855.5 L922.19 865.8 L922.90 860.8 L923.77 869.2 L924.52 852.5 L925.45 872.3 L926.27 857.2 L927.14 870.6 L927.89 862.5 L928.79 876.0 L929.47 861.8 L930.16 875.0 L930.84 853.6 L931.69 870.6 L932.55 859.7 L933.26 870.0 L934.03 859.1 L934.93 876.6 L935.76 856.2 L936.43 877.3 L937.15 854.5 L937.85 881.1 L937.90 856.3 L938.53 937.7 L938.60 924.8 L939.30 884.3 L939.31 847.2 L939.60 871.3 L939.98 806.5 L940.60 766.4 L940.90 756.4 L941.68 815.1 L942.49 805.9 L943.33 848.0 L944.21 824.3 L945.11 860.3 L945.87 831.7 L946.62 869.5 L947.40 830.7 L948.05 872.8 L948.82 831.5 L949.68 862.5 L950.62 840.4 L951.51 874.4 L952.36 840.2 L953.19 863.6 L953.85 846.4 L954.60 867.5 L955.35 846.8 L956.20 869.2 L956.88 842.1 L957.64 865.7 L958.44 853.1 L959.33 859.5 L960.23 844.7 L961.06 866.6 L961.76 845.9 L962.64 860.7 L963.56 840.5 L964.37 862.8 L965.13 848.2 L965.93 865.0" fill="none" stroke="#14868a" stroke-width="1.3" stroke-linejoin="round"/></g></svg><div class="t" style="left:178.50px;top:550.09px;width:40px;font-size:13px;line-height:13px;color:#262626;font-weight:400;text-align:right;font-family:'Liberation Sans', sans-serif;transform:scaleX(0.92);transform-origin:100% 50%;">-8</div><div class="t" style="left:178.50px;top:589.69px;width:40px;font-size:13px;line-height:13px;color:#262626;font-weight:400;text-align:right;font-family:'Liberation Sans', sans-serif;transform:scaleX(0.92);transform-origin:100% 50%;">-9</div><div class="t" style="left:178.50px;top:629.29px;width:40px;font-size:13px;line-height:13px;color:#262626;font-weight:400;text-align:right;font-family:'Liberation Sans', sans-serif;transform:scaleX(0.92);transform-origin:100% 50%;">-10</div><div class="t" style="left:178.50px;top:668.89px;width:40px;font-size:13px;line-height:13px;color:#262626;font-weight:400;text-align:right;font-family:'Liberation Sans', sans-serif;transform:scaleX(0.92);transform-origin:100% 50%;">-11</div><div class="t" style="left:178.50px;top:708.49px;width:40px;font-size:13px;line-height:13px;color:#262626;font-weight:400;text-align:right;font-family:'Liberation Sans', sans-serif;transform:scaleX(0.92);transform-origin:100% 50%;">-12</div><div class="t" style="left:178.50px;top:748.09px;width:40px;font-size:13px;line-height:13px;color:#262626;font-weight:400;text-align:right;font-family:'Liberation Sans', sans-serif;transform:scaleX(0.92);transform-origin:100% 50%;">-13</div><div class="t" style="left:178.50px;top:787.69px;width:40px;font-size:13px;line-height:13px;color:#262626;font-weight:400;text-align:right;font-family:'Liberation Sans', sans-serif;transform:scaleX(0.92);transform-origin:100% 50%;">-14</div><div class="t" style="left:178.50px;top:827.29px;width:40px;font-size:13px;line-height:13px;color:#262626;font-weight:400;text-align:right;font-family:'Liberation Sans', sans-serif;transform:scaleX(0.92);transform-origin:100% 50%;">-15</div><div class="t" style="left:178.50px;top:866.89px;width:40px;font-size:13px;line-height:13px;color:#262626;font-weight:400;text-align:right;font-family:'Liberation Sans', sans-serif;transform:scaleX(0.92);transform-origin:100% 50%;">-16</div><div class="t" style="left:178.50px;top:906.49px;width:40px;font-size:13px;line-height:13px;color:#262626;font-weight:400;text-align:right;font-family:'Liberation Sans', sans-serif;transform:scaleX(0.92);transform-origin:100% 50%;">-17</div><div class="t" style="left:178.50px;top:946.09px;width:40px;font-size:13px;line-height:13px;color:#262626;font-weight:400;text-align:right;font-family:'Liberation Sans', sans-serif;transform:scaleX(0.92);transform-origin:100% 50%;">-18</div><div class="t" style="left:235.40px;top:979.83px;width:80px;font-size:12.6px;line-height:12.6px;color:#262626;font-weight:400;text-align:center;font-family:'Liberation Sans', sans-serif;transform:scaleX(0.98);transform-origin:50% 50%;">22 Oct</div><div class="t" style="left:343.80px;top:979.83px;width:80px;font-size:12.6px;line-height:12.6px;color:#262626;font-weight:400;text-align:center;font-family:'Liberation Sans', sans-serif;transform:scaleX(0.98);transform-origin:50% 50%;">24 Oct</div><div class="t" style="left:452.40px;top:979.83px;width:80px;font-size:12.6px;line-height:12.6px;color:#262626;font-weight:400;text-align:center;font-family:'Liberation Sans', sans-serif;transform:scaleX(0.98);transform-origin:50% 50%;">26 Oct</div><div class="t" style="left:563.20px;top:979.83px;width:80px;font-size:12.6px;line-height:12.6px;color:#262626;font-weight:400;text-align:center;font-family:'Liberation Sans', sans-serif;transform:scaleX(0.98);transform-origin:50% 50%;">28 Oct</div><div class="t" style="left:671.70px;top:979.83px;width:80px;font-size:12.6px;line-height:12.6px;color:#262626;font-weight:400;text-align:center;font-family:'Liberation Sans', sans-serif;transform:scaleX(0.98);transform-origin:50% 50%;">30 Oct</div><div class="t" style="left:780.50px;top:979.83px;width:80px;font-size:12.6px;line-height:12.6px;color:#262626;font-weight:400;text-align:center;font-family:'Liberation Sans', sans-serif;transform:scaleX(0.98);transform-origin:50% 50%;">01 Nov</div><div class="t" style="left:889.40px;top:979.83px;width:80px;font-size:12.6px;line-height:12.6px;color:#262626;font-weight:400;text-align:center;font-family:'Liberation Sans', sans-serif;transform:scaleX(0.98);transform-origin:50% 50%;">03 Nov</div><div class="t" style="left:111px;top:761px;width:140px;height:16px;font-size:14.4px;line-height:16px;color:#333;text-align:center;transform:rotate(-90deg);transform-origin:70px 8px;">Temperatur (°C)</div><div class="r" style="left:963.00px;top:137.00px;width:999.00px;height:940.00px;background:#fff;border-radius:8px 0 0 0;border-left:1px solid #c9c9c9;box-sizing:border-box;box-shadow:-4px 0 14px rgba(0,0,0,0.14);"></div><div class="r" style="left:963.50px;top:137.00px;width:998.50px;height:34.00px;background:#e6e6e6;border-radius:8px 0 0 0;"></div><svg class="r" style="left:979.00px;top:148.00px;" width="16" height="14" viewBox="0 0 16 14"><path d="M1 2 H15 M1 7 H15 M1 12 H15" stroke="#2c2c2c" stroke-width="1.6"/></svg><div class="t" style="left:1002.50px;top:150.26px;width:800px;font-size:11.5px;line-height:11.5px;color:#2c2c2c;font-weight:400;text-align:left;font-family:'Liberation Sans', sans-serif;">Menü</div><svg class="r" style="left:1056.00px;top:145.00px;" width="19" height="18" viewBox="0 0 19 18"><path d="M2 9 L9.5 2 L17 9 M4.5 7 V16 H8 V11.5 H11 V16 H14.5 V7" fill="none" stroke="#222" stroke-width="1.7" stroke-linejoin="round"/></svg><div class="r" style="left:1080.50px;top:146.00px;width:1.00px;height:18.00px;background:#c9c9c9;"></div><div class="r" style="left:1085.00px;top:139.00px;width:210.50px;height:32.00px;background:#fff;border-radius:6px 6px 0 0;"></div><svg class="r" style="left:1096.00px;top:145.00px;" width="18" height="18" viewBox="0 0 18 18"><path d="M9 1.8 L11.1 6.6 L16.2 7 L12.3 10.4 L13.5 15.5 L9 12.8 L4.5 15.5 L5.7 10.4 L1.8 7 L6.9 6.6 Z" fill="none" stroke="#3a3a3a" stroke-width="1.5" stroke-linejoin="round"/></svg><div class="t" style="left:1121.00px;top:148.39px;width:800px;font-size:14.3px;line-height:14.3px;color:#1a1a1a;font-weight:400;text-align:left;font-family:'Liberation Sans', sans-serif;">haccp_report-82232...</div><svg class="r" style="left:1273.00px;top:149.00px;" width="12" height="12" viewBox="0 0 12 12"><path d="M1.5 1.5 L10.5 10.5 M10.5 1.5 L1.5 10.5" stroke="#444" stroke-width="1.6"/></svg><div class="r" style="left:1299.50px;top:143.00px;width:86.50px;height:23.50px;background:#ededed;border:1px solid #c4c4c4;border-radius:4px;box-sizing:border-box;"></div><svg class="r" style="left:1307.50px;top:148.50px;" width="13" height="13" viewBox="0 0 13 13"><path d="M6.5 1 V12 M1 6.5 H12" stroke="#333" stroke-width="1.6"/></svg><div class="t" style="left:1329.00px;top:149.50px;width:800px;font-size:12.4px;line-height:12.4px;color:#2c2c2c;font-weight:400;text-align:left;font-family:'Liberation Sans', sans-serif;">Erstellen</div><svg class="r" style="left:1731.00px;top:146.00px;" width="18" height="18" viewBox="0 0 18 18"><circle cx="9" cy="9" r="7.6" fill="none" stroke="#222" stroke-width="1.6"/><path d="M6.6 7 Q6.6 4.6 9 4.6 Q11.4 4.6 11.4 6.8 Q11.4 8.3 9.4 9.2 Q9 9.5 9 11" fill="none" stroke="#222" stroke-width="1.6"/><circle cx="9" cy="13.3" r="1" fill="#222"/></svg><svg class="r" style="left:1764.00px;top:145.00px;" width="18" height="19" viewBox="0 0 18 19"><path d="M3 14 Q4.5 12.5 4.5 10 V8 A4.5 4.5 0 0 1 13.5 8 V10 Q13.5 12.5 15 14 Z" fill="none" stroke="#222" stroke-width="1.6" stroke-linejoin="round"/><path d="M7 16 Q9 18.5 11 16" fill="none" stroke="#222" stroke-width="1.6"/></svg><svg class="r" style="left:1797.00px;top:145.00px;" width="18" height="18" viewBox="0 0 18 18"><circle cx="2.5" cy="3" r="1.9" fill="#333"/><circle cx="2.5" cy="8" r="1.9" fill="#333"/><circle cx="2.5" cy="13" r="1.9" fill="#333"/><circle cx="7.5" cy="3" r="1.9" fill="#333"/><circle cx="7.5" cy="8" r="1.9" fill="#333"/><circle cx="7.5" cy="13" r="1.9" fill="#333"/><circle cx="12.5" cy="8" r="1.9" fill="#333"/><circle cx="12.5" cy="13" r="1.9" fill="#333"/><circle cx="14" cy="2.8" r="2.8" fill="#2b7de9"/></svg><svg class="r" style="left:1827.50px;top:145.00px;" width="20" height="20" viewBox="0 0 20 20"><circle cx="10" cy="10" r="9" fill="#19b4e8"/><path d="M5 14 Q8 9 13 7 Q15 9 15 14 Z" fill="#1a9fd0" opacity="0.6"/></svg><div class="r" style="left:1882.50px;top:153.00px;width:14.50px;height:2.00px;background:#222;"></div><div class="r" style="left:1933.00px;top:147.50px;width:12.50px;height:11.50px;border:1.6px solid #222;box-sizing:border-box;"></div><div class="r" style="left:963.50px;top:218.00px;width:998.50px;height:1.00px;background:#e0e0e0;"></div><div class="t" style="left:978.50px;top:188.06px;width:800px;font-size:14.1px;line-height:14.1px;color:#2c2c2c;font-weight:400;text-align:left;font-family:'Liberation Sans', sans-serif;">Alle Tools</div><div class="t" style="left:1063.00px;top:188.06px;width:800px;font-size:14.1px;line-height:14.1px;color:#2c2c2c;font-weight:400;text-align:left;font-family:'Liberation Sans', sans-serif;">Bearbeiten</div><div class="t" style="left:1156.00px;top:188.06px;width:800px;font-size:14.1px;line-height:14.1px;color:#2c2c2c;font-weight:400;text-align:left;font-family:'Liberation Sans', sans-serif;">Konvertieren</div><div class="t" style="left:1261.00px;top:188.06px;width:800px;font-size:14.1px;line-height:14.1px;color:#2c2c2c;font-weight:400;text-align:left;font-family:'Liberation Sans', sans-serif;">Elektronische Signaturen</div><div class="t" style="left:1455.50px;top:188.06px;width:800px;font-size:14.1px;line-height:14.1px;color:#2c2c2c;font-weight:400;text-align:left;font-family:'Liberation Sans', sans-serif;">Text oder Tools suchen</div><svg class="r" style="left:1608.00px;top:186.00px;" width="18" height="18" viewBox="0 0 18 18"><circle cx="7.3" cy="7.3" r="5.6" fill="none" stroke="#222" stroke-width="1.9"/><path d="M11.4 11.4 L16.5 16.5" stroke="#222" stroke-width="2"/></svg><div class="r" style="left:1645.00px;top:186.00px;width:1.00px;height:18.00px;background:#d5d5d5;"></div><svg class="r" style="left:1662.00px;top:186.00px;" width="18" height="18" viewBox="0 0 18 18"><path d="M2 2 H13 L16 5 V16 H2 Z" fill="none" stroke="#9a9a9a" stroke-width="1.5" stroke-linejoin="round"/><rect x="5" y="2" width="7" height="4.5" fill="none" stroke="#9a9a9a" stroke-width="1.3"/><rect x="4.5" y="10" width="9" height="6" fill="none" stroke="#9a9a9a" stroke-width="1.3"/></svg><svg class="r" style="left:1703.00px;top:185.00px;" width="20" height="20" viewBox="0 0 20 20"><path d="M6 14.5 H4.5 A3.8 3.8 0 0 1 4.3 7 A5.6 5.6 0 0 1 15 6.2 A4.2 4.2 0 0 1 15.5 14.5 H14" fill="none" stroke="#222" stroke-width="1.7" stroke-linejoin="round"/><path d="M10 19 V9.5 M6.8 12.5 L10 9.3 L13.2 12.5" fill="none" stroke="#222" stroke-width="1.7"/></svg><svg class="r" style="left:1745.00px;top:185.00px;" width="20" height="20" viewBox="0 0 20 20"><path d="M5.5 6 V2.5 H14.5 V6" fill="none" stroke="#222" stroke-width="1.7"/><rect x="1.8" y="6" width="16.4" height="8.5" rx="1.8" fill="none" stroke="#222" stroke-width="1.7"/><rect x="5.5" y="11.5" width="9" height="6" fill="#fff" stroke="#222" stroke-width="1.7"/></svg><div class="r" style="left:1780.50px;top:186.00px;width:1.00px;height:18.00px;background:#d5d5d5;"></div><div class="r" style="left:1789.00px;top:179.00px;width:105.00px;height:32.00px;background:#222;border-radius:16px;"></div><div class="t" style="left:1789.00px;top:187.30px;width:105px;font-size:15px;line-height:15px;color:#ffffff;font-weight:700;text-align:center;font-family:'Liberation Sans', sans-serif;">Freigeben</div><svg class="r" style="left:1906.00px;top:191.00px;" width="21" height="7" viewBox="0 0 21 7"><circle cx="3" cy="3.5" r="2" fill="#444"/><circle cx="10.5" cy="3.5" r="2" fill="#444"/><circle cx="18" cy="3.5" r="2" fill="#444"/></svg><div class="r" style="left:963.50px;top:219.00px;width:69.20px;height:858.00px;background:#f8f8f8;border-right:1px solid #dcdcdc;box-sizing:border-box;"></div><div class="r" style="left:981.00px;top:231.50px;width:39.50px;height:291.00px;background:#fff;border:1px solid #b3b3b3;border-radius:5px;box-sizing:border-box;"></div><div class="r" style="left:985.00px;top:235.00px;width:32.00px;height:4.00px;background:#bdbdbd;border-radius:2px;"></div><div class="r" style="left:985.00px;top:247.00px;width:32.00px;height:32.00px;background:#0d62d0;border-radius:3px;"></div><svg class="r" style="left:985.00px;top:247.00px;" width="32" height="32" viewBox="0 0 32 32"><path d="M11 8 L11 22 L14.5 18.8 L17 24.2 L19.2 23.2 L16.8 18 L21.5 17.5 Z" fill="#fff"/><path d="M27 24 V28 H23 Z" fill="#fff"/></svg><svg class="r" style="left:989.00px;top:290.00px;" width="24" height="24" viewBox="0 0 24 24"><path d="M18.3 11.5 A7 7 0 1 0 11.3 18.5 H18.3 Z" fill="none" stroke="#222" stroke-width="1.7" stroke-linejoin="round"/><path d="M8 9.8 H14.5 M8 13 H12.5" stroke="#222" stroke-width="1.6"/><path d="M23 19 V23 H19 Z" fill="#222"/></svg><svg class="r" style="left:989.00px;top:331.00px;" width="24" height="24" viewBox="0 0 24 24"><path d="M6.5 18 L4.5 20.5 L8.5 20.5 L9.5 19.5 Z" fill="#222"/><path d="M7 17.5 L15.8 6 Q17.3 4.3 19 5.8 Q20.6 7.3 19 9 L10 19 Z" fill="none" stroke="#222" stroke-width="1.7" stroke-linejoin="round"/><path d="M10.5 19.5 L20 19.5 L19 17.2 L13 17.2 Z" fill="#9c9c9c"/><path d="M23 19 V23 H19 Z" fill="#222"/></svg><svg class="r" style="left:989.00px;top:372.00px;" width="24" height="24" viewBox="0 0 24 24"><path d="M17 9.5 Q16.5 5 10.5 5 Q3.8 5 3.8 9.6 Q3.8 14.2 10.2 14.2 Q14.5 14.2 16 12.3 Q13.2 11.2 11.8 13.2" fill="none" stroke="#222" stroke-width="1.7" stroke-linecap="round" stroke-linejoin="round"/><path d="M23 19 V23 H19 Z" fill="#222"/></svg><svg class="r" style="left:989.00px;top:411.00px;" width="24" height="24" viewBox="0 0 24 24"><rect x="3.5" y="3" width="15" height="16.5" fill="none" stroke="#222" stroke-width="1.8" stroke-dasharray="2.3 1.5"/><path d="M7.8 15.5 L11 6.8 L14.2 15.5 M9 12.6 H13" fill="none" stroke="#222" stroke-width="1.5"/><path d="M23 19 V23 H19 Z" fill="#222"/></svg><svg class="r" style="left:989.00px;top:451.00px;" width="24" height="24" viewBox="0 0 24 24"><path d="M4 19 Q3.5 13.5 6.5 10 L10.5 5.5 L16 11 L11.5 15 Q8.5 18 4 19 Z" fill="none" stroke="#222" stroke-width="1.8" stroke-linejoin="round"/><path d="M10.5 5.5 L12.3 3.8 L17.7 9.2 L16 11" fill="none" stroke="#222" stroke-width="1.7" stroke-linejoin="round"/><path d="M4.3 18.7 L8.6 14.4" stroke="#222" stroke-width="1.3"/><circle cx="9.3" cy="13.6" r="1.3" fill="#222"/><path d="M13.5 18.5 Q15 16 16 18 Q17 19.5 18.5 17.5" fill="none" stroke="#222" stroke-width="1.3"/><path d="M23 19 V23 H19 Z" fill="#222"/></svg><svg class="r" style="left:992.00px;top:500.00px;" width="18" height="6" viewBox="0 0 18 6"><circle cx="3.2" cy="2.8" r="1.15" fill="#222"/><circle cx="9" cy="2.8" r="1.15" fill="#222"/><circle cx="14.8" cy="2.8" r="1.15" fill="#222"/></svg><div class="r" style="left:1942.00px;top:219.00px;width:20.00px;height:858.00px;background:#f3f3f3;border-left:1px solid #dedede;box-sizing:border-box;"></div><div class="r" style="left:1955.50px;top:236.00px;width:2.50px;height:550.00px;background:#6f6f6f;border-radius:1px;"></div><div class="t" style="left:1085.00px;top:275.66px;width:800px;font-size:13.75px;line-height:13.75px;color:#333333;font-weight:400;text-align:left;font-family:'Liberation Sans', sans-serif;">HACCP Report Oktober 2025</div><div class="r" style="left:1085.00px;top:302.50px;width:660.50px;height:1.60px;background:#222;"></div><div class="t" style="left:1085.00px;top:331.36px;width:800px;font-size:13.75px;line-height:13.75px;color:#333333;font-weight:400;text-align:left;font-family:'Liberation Sans', sans-serif;">Standort 1 (PolarFoxx)</div><div class="t" style="left:1085.00px;top:352.36px;width:800px;font-size:13.75px;line-height:13.75px;color:#333333;font-weight:400;text-align:left;font-family:'Liberation Sans', sans-serif;">Martinstr. 63</div><div class="t" style="left:1085.00px;top:373.36px;width:800px;font-size:13.75px;line-height:13.75px;color:#333333;font-weight:400;text-align:left;font-family:'Liberation Sans', sans-serif;">53332 Bornheim</div><div class="t" style="left:1085.00px;top:405.36px;width:800px;font-size:13.75px;line-height:13.75px;color:#333333;font-weight:400;text-align:left;font-family:'Liberation Sans', sans-serif;">Name der Kühleinheit: 82232470 - Tiefkühlhaus Keller</div><svg class="r" style="left:1750.00px;top:250.00px;" width="125" height="90" viewBox="0 0 125 90"><path d="M25.9 4.9 L46.8 19.2 L45.0 21.2 Z" fill="#111"/><path d="M25.9 4.9 L27.2 5.2 L34.6 28.2 L33.4 28.6 Z" fill="#111"/><path d="M31.5 16.8 L45.8 22.2 L45.8 32.6 L38.6 30.4 Z" fill="#111"/><path d="M91.1 4.9 L70.2 19.2 L72.0 21.2 Z" fill="#111"/><path d="M91.1 4.9 L89.8 5.2 L82.4 28.2 L83.6 28.6 Z" fill="#111"/><path d="M85.5 16.8 L71.2 22.2 L71.2 32.6 L78.4 30.4 Z" fill="#111"/><path d="M50.3 21.3 L58.5 19.9 L66.8 21.3 L58.5 22.9 Z" fill="#111"/><path d="M35.7 45.2 L51.2 50.3 L55.1 64.7 L48.3 52.6 Z" fill="#111"/><path d="M81.3 45.2 L65.8 50.3 L61.9 64.7 L68.7 52.6 Z" fill="#111"/><text x="6" y="82.2" font-size="12.6" font-weight="700" fill="#111" font-family="Liberation Sans" textLength="105" lengthAdjust="spacing">POLARFOXX</text><circle cx="114" cy="72.3" r="2.9" fill="none" stroke="#111" stroke-width="0.8"/><text x="114" y="73.9" font-size="4.2" fill="#111" text-anchor="middle" font-family="Liberation Sans" font-weight="700">R</text></svg><div class="r" style="left:1085.20px;top:433.00px;width:805.20px;height:1.00px;background:#d9d9d9;"></div><div class="r" style="left:1085.20px;top:493.60px;width:805.20px;height:1.00px;background:#d9d9d9;"></div><div class="r" style="left:1085.20px;top:520.07px;width:805.20px;height:1.00px;background:#d9d9d9;"></div><div class="r" style="left:1085.20px;top:546.54px;width:805.20px;height:1.00px;background:#d9d9d9;"></div><div class="r" style="left:1085.20px;top:573.01px;width:805.20px;height:1.00px;background:#d9d9d9;"></div><div class="r" style="left:1085.20px;top:599.48px;width:805.20px;height:1.00px;background:#d9d9d9;"></div><div class="r" style="left:1085.20px;top:625.95px;width:805.20px;height:1.00px;background:#d9d9d9;"></div><div class="r" style="left:1085.20px;top:652.42px;width:805.20px;height:1.00px;background:#d9d9d9;"></div><div class="r" style="left:1085.20px;top:678.89px;width:805.20px;height:1.00px;background:#d9d9d9;"></div><div class="r" style="left:1085.20px;top:705.36px;width:805.20px;height:1.00px;background:#d9d9d9;"></div><div class="r" style="left:1085.20px;top:731.83px;width:805.20px;height:1.00px;background:#d9d9d9;"></div><div class="r" style="left:1085.20px;top:758.30px;width:805.20px;height:1.00px;background:#d9d9d9;"></div><div class="r" style="left:1085.20px;top:784.77px;width:805.20px;height:1.00px;background:#d9d9d9;"></div><div class="r" style="left:1085.20px;top:811.24px;width:805.20px;height:1.00px;background:#d9d9d9;"></div><div class="r" style="left:1085.20px;top:837.71px;width:805.20px;height:1.00px;background:#d9d9d9;"></div><div class="r" style="left:1085.20px;top:864.18px;width:805.20px;height:1.00px;background:#d9d9d9;"></div><div class="r" style="left:1085.20px;top:890.65px;width:805.20px;height:1.00px;background:#d9d9d9;"></div><div class="r" style="left:1085.20px;top:917.12px;width:805.20px;height:1.00px;background:#d9d9d9;"></div><div class="r" style="left:1085.20px;top:943.59px;width:805.20px;height:1.00px;background:#d9d9d9;"></div><div class="r" style="left:1085.20px;top:970.06px;width:805.20px;height:1.00px;background:#d9d9d9;"></div><div class="r" style="left:1085.20px;top:996.53px;width:805.20px;height:1.00px;background:#d9d9d9;"></div><div class="r" style="left:1085.20px;top:1023.00px;width:805.20px;height:1.00px;background:#d9d9d9;"></div><div class="r" style="left:1085.20px;top:1049.47px;width:805.20px;height:1.00px;background:#d9d9d9;"></div><div class="r" style="left:1085.20px;top:433.00px;width:1.00px;height:644.00px;background:#d9d9d9;"></div><div class="r" style="left:1173.40px;top:433.00px;width:1.00px;height:644.00px;background:#d9d9d9;"></div><div class="r" style="left:1268.50px;top:433.00px;width:1.00px;height:644.00px;background:#d9d9d9;"></div><div class="r" style="left:1890.40px;top:433.00px;width:1.00px;height:644.00px;background:#d9d9d9;"></div><div class="t" style="left:1069.30px;top:447.72px;width:120px;font-size:13.8px;line-height:13.8px;color:#222;font-weight:700;text-align:center;font-family:'Liberation Sans', sans-serif;">Datum</div><div class="t" style="left:1160.95px;top:448.32px;width:120px;font-size:13.8px;line-height:13.8px;color:#222;font-weight:700;text-align:center;font-family:'Liberation Sans', sans-serif;">Temperatur</div><div class="t" style="left:1160.95px;top:468.32px;width:120px;font-size:13.8px;line-height:13.8px;color:#222;font-weight:700;text-align:center;font-family:'Liberation Sans', sans-serif;">06:00</div><div class="t" style="left:1479.45px;top:447.72px;width:200px;font-size:13.8px;line-height:13.8px;color:#222;font-weight:700;text-align:center;font-family:'Liberation Sans', sans-serif;">Bemerkungen</div><div class="t" style="left:1069.30px;top:497.47px;width:120px;font-size:13.5px;line-height:13.5px;color:#333333;font-weight:400;text-align:center;font-family:'Liberation Sans', sans-serif;">01.10.2025</div><div class="t" style="left:1160.95px;top:497.47px;width:120px;font-size:13.5px;line-height:13.5px;color:#333333;font-weight:400;text-align:center;font-family:'Liberation Sans', sans-serif;">-15.26</div><div class="t" style="left:1069.30px;top:523.94px;width:120px;font-size:13.5px;line-height:13.5px;color:#333333;font-weight:400;text-align:center;font-family:'Liberation Sans', sans-serif;">02.10.2025</div><div class="t" style="left:1160.95px;top:523.94px;width:120px;font-size:13.5px;line-height:13.5px;color:#333333;font-weight:400;text-align:center;font-family:'Liberation Sans', sans-serif;">-11.05</div><div class="t" style="left:1069.30px;top:550.41px;width:120px;font-size:13.5px;line-height:13.5px;color:#333333;font-weight:400;text-align:center;font-family:'Liberation Sans', sans-serif;">03.10.2025</div><div class="t" style="left:1160.95px;top:550.41px;width:120px;font-size:13.5px;line-height:13.5px;color:#333333;font-weight:400;text-align:center;font-family:'Liberation Sans', sans-serif;">-15.61</div><div class="t" style="left:1069.30px;top:576.88px;width:120px;font-size:13.5px;line-height:13.5px;color:#333333;font-weight:400;text-align:center;font-family:'Liberation Sans', sans-serif;">04.10.2025</div><div class="t" style="left:1160.95px;top:576.88px;width:120px;font-size:13.5px;line-height:13.5px;color:#333333;font-weight:400;text-align:center;font-family:'Liberation Sans', sans-serif;">-16.79</div><div class="t" style="left:1069.30px;top:603.35px;width:120px;font-size:13.5px;line-height:13.5px;color:#333333;font-weight:400;text-align:center;font-family:'Liberation Sans', sans-serif;">05.10.2025</div><div class="t" style="left:1160.95px;top:603.35px;width:120px;font-size:13.5px;line-height:13.5px;color:#333333;font-weight:400;text-align:center;font-family:'Liberation Sans', sans-serif;">-15.93</div><div class="t" style="left:1069.30px;top:629.82px;width:120px;font-size:13.5px;line-height:13.5px;color:#333333;font-weight:400;text-align:center;font-family:'Liberation Sans', sans-serif;">06.10.2025</div><div class="t" style="left:1160.95px;top:629.82px;width:120px;font-size:13.5px;line-height:13.5px;color:#333333;font-weight:400;text-align:center;font-family:'Liberation Sans', sans-serif;">-15.87</div><div class="t" style="left:1069.30px;top:656.29px;width:120px;font-size:13.5px;line-height:13.5px;color:#333333;font-weight:400;text-align:center;font-family:'Liberation Sans', sans-serif;">07.10.2025</div><div class="t" style="left:1160.95px;top:656.29px;width:120px;font-size:13.5px;line-height:13.5px;color:#333333;font-weight:400;text-align:center;font-family:'Liberation Sans', sans-serif;">-16.83</div><div class="t" style="left:1069.30px;top:682.76px;width:120px;font-size:13.5px;line-height:13.5px;color:#333333;font-weight:400;text-align:center;font-family:'Liberation Sans', sans-serif;">08.10.2025</div><div class="t" style="left:1160.95px;top:682.76px;width:120px;font-size:13.5px;line-height:13.5px;color:#333333;font-weight:400;text-align:center;font-family:'Liberation Sans', sans-serif;">-15.50</div><div class="t" style="left:1069.30px;top:709.23px;width:120px;font-size:13.5px;line-height:13.5px;color:#333333;font-weight:400;text-align:center;font-family:'Liberation Sans', sans-serif;">09.10.2025</div><div class="t" style="left:1160.95px;top:709.23px;width:120px;font-size:13.5px;line-height:13.5px;color:#333333;font-weight:400;text-align:center;font-family:'Liberation Sans', sans-serif;">-15.66</div><div class="t" style="left:1069.30px;top:735.70px;width:120px;font-size:13.5px;line-height:13.5px;color:#333333;font-weight:400;text-align:center;font-family:'Liberation Sans', sans-serif;">10.10.2025</div><div class="t" style="left:1160.95px;top:735.70px;width:120px;font-size:13.5px;line-height:13.5px;color:#333333;font-weight:400;text-align:center;font-family:'Liberation Sans', sans-serif;">-15.43</div><div class="t" style="left:1069.30px;top:762.17px;width:120px;font-size:13.5px;line-height:13.5px;color:#333333;font-weight:400;text-align:center;font-family:'Liberation Sans', sans-serif;">11.10.2025</div><div class="t" style="left:1160.95px;top:762.17px;width:120px;font-size:13.5px;line-height:13.5px;color:#333333;font-weight:400;text-align:center;font-family:'Liberation Sans', sans-serif;">-15.52</div><div class="t" style="left:1069.30px;top:788.64px;width:120px;font-size:13.5px;line-height:13.5px;color:#333333;font-weight:400;text-align:center;font-family:'Liberation Sans', sans-serif;">12.10.2025</div><div class="t" style="left:1160.95px;top:788.64px;width:120px;font-size:13.5px;line-height:13.5px;color:#333333;font-weight:400;text-align:center;font-family:'Liberation Sans', sans-serif;">-15.20</div><div class="t" style="left:1069.30px;top:815.11px;width:120px;font-size:13.5px;line-height:13.5px;color:#333333;font-weight:400;text-align:center;font-family:'Liberation Sans', sans-serif;">13.10.2025</div><div class="t" style="left:1160.95px;top:815.11px;width:120px;font-size:13.5px;line-height:13.5px;color:#333333;font-weight:400;text-align:center;font-family:'Liberation Sans', sans-serif;">-15.57</div><div class="t" style="left:1069.30px;top:841.58px;width:120px;font-size:13.5px;line-height:13.5px;color:#333333;font-weight:400;text-align:center;font-family:'Liberation Sans', sans-serif;">14.10.2025</div><div class="t" style="left:1160.95px;top:841.58px;width:120px;font-size:13.5px;line-height:13.5px;color:#333333;font-weight:400;text-align:center;font-family:'Liberation Sans', sans-serif;">-15.70</div><div class="t" style="left:1069.30px;top:868.05px;width:120px;font-size:13.5px;line-height:13.5px;color:#333333;font-weight:400;text-align:center;font-family:'Liberation Sans', sans-serif;">15.10.2025</div><div class="t" style="left:1160.95px;top:868.05px;width:120px;font-size:13.5px;line-height:13.5px;color:#333333;font-weight:400;text-align:center;font-family:'Liberation Sans', sans-serif;">-15.36</div><div class="t" style="left:1069.30px;top:894.52px;width:120px;font-size:13.5px;line-height:13.5px;color:#333333;font-weight:400;text-align:center;font-family:'Liberation Sans', sans-serif;">16.10.2025</div><div class="t" style="left:1160.95px;top:894.52px;width:120px;font-size:13.5px;line-height:13.5px;color:#333333;font-weight:400;text-align:center;font-family:'Liberation Sans', sans-serif;">-15.31</div><div class="t" style="left:1069.30px;top:920.99px;width:120px;font-size:13.5px;line-height:13.5px;color:#333333;font-weight:400;text-align:center;font-family:'Liberation Sans', sans-serif;">17.10.2025</div><div class="t" style="left:1160.95px;top:920.99px;width:120px;font-size:13.5px;line-height:13.5px;color:#333333;font-weight:400;text-align:center;font-family:'Liberation Sans', sans-serif;">-15.49</div><div class="t" style="left:1069.30px;top:947.46px;width:120px;font-size:13.5px;line-height:13.5px;color:#333333;font-weight:400;text-align:center;font-family:'Liberation Sans', sans-serif;">18.10.2025</div><div class="t" style="left:1160.95px;top:947.46px;width:120px;font-size:13.5px;line-height:13.5px;color:#333333;font-weight:400;text-align:center;font-family:'Liberation Sans', sans-serif;">-15.32</div><div class="t" style="left:1069.30px;top:973.93px;width:120px;font-size:13.5px;line-height:13.5px;color:#333333;font-weight:400;text-align:center;font-family:'Liberation Sans', sans-serif;">19.10.2025</div><div class="t" style="left:1160.95px;top:973.93px;width:120px;font-size:13.5px;line-height:13.5px;color:#333333;font-weight:400;text-align:center;font-family:'Liberation Sans', sans-serif;">-15.30</div><div class="t" style="left:1069.30px;top:1000.40px;width:120px;font-size:13.5px;line-height:13.5px;color:#333333;font-weight:400;text-align:center;font-family:'Liberation Sans', sans-serif;">20.10.2025</div><div class="t" style="left:1160.95px;top:1000.40px;width:120px;font-size:13.5px;line-height:13.5px;color:#333333;font-weight:400;text-align:center;font-family:'Liberation Sans', sans-serif;">-14.39</div><div class="t" style="left:1069.30px;top:1026.87px;width:120px;font-size:13.5px;line-height:13.5px;color:#333333;font-weight:400;text-align:center;font-family:'Liberation Sans', sans-serif;">21.10.2025</div><div class="t" style="left:1160.95px;top:1026.87px;width:120px;font-size:13.5px;line-height:13.5px;color:#333333;font-weight:400;text-align:center;font-family:'Liberation Sans', sans-serif;">-15.40</div><div class="r" style="left:1092.50px;top:1026.50px;width:791.50px;height:60.00px;background:#e8e8e8;border:1px solid #d3d3d3;border-radius:9px 9px 0 0;box-sizing:border-box;"></div><svg class="r" style="left:1110.00px;top:1042.00px;" width="20" height="18" viewBox="0 0 20 18"><rect x="1" y="4" width="14" height="12" rx="2" fill="#222"/><path d="M15 1 L16 4 L19 5 L16 6 L15 9 L14 6 L11 5 L14 4 Z" fill="#222"/></svg><div class="t" style="left:1136.30px;top:1044.60px;width:800px;font-size:14.65px;line-height:14.65px;color:#111;font-weight:700;text-align:left;font-family:'Liberation Sans', sans-serif;">Den KI-Assistenten fragen</div><div class="r" style="left:1361.50px;top:1033.00px;width:463.50px;height:37.50px;background:#fff;border:1.5px solid #d9d9d9;border-radius:9px;box-sizing:border-box;"></div><div class="t" style="left:1376.00px;top:1044.15px;width:800px;font-size:14px;line-height:14px;color:#b3b3b3;font-weight:400;text-align:left;font-family:'Liberation Sans', sans-serif;">Vereinfachen Sie das Dokument für mich</div><div class="r" style="left:1792.50px;top:1040.00px;width:24.50px;height:23.50px;background:#dadada;border-radius:4px;"></div><svg class="r" style="left:1795.00px;top:1042.00px;" width="20" height="20" viewBox="0 0 20 20"><path d="M3 4 L17 10 L3 16 L5.5 10 Z M5.5 10 H11" fill="none" stroke="#a5a5a5" stroke-width="1.4" stroke-linejoin="round"/></svg><svg class="r" style="left:1847.00px;top:1049.00px;" width="17" height="5" viewBox="0 0 17 5"><circle cx="2.5" cy="2.5" r="1.5" fill="#333"/><circle cx="8.5" cy="2.5" r="1.5" fill="#333"/><circle cx="14.5" cy="2.5" r="1.5" fill="#333"/></svg><div class="r" style="left:1034.50px;top:1047.50px;width:97.00px;height:22.00px;background:#1e1e1e;border-radius:4px;box-shadow:0 1px 3px rgba(0,0,0,0.3);"></div><div class="t" style="left:1034.50px;top:1052.59px;width:97px;font-size:12.3px;line-height:12.3px;color:#f2f2f2;font-weight:400;text-align:center;font-family:'Liberation Sans', sans-serif;">210 x 297 mm</div><div class="r" style="left:42.00px;top:1077.00px;width:1920.00px;height:48.00px;background:#172a3e;"></div><div class="r" style="left:42.00px;top:1124.20px;width:1920.00px;height:0.80px;background:#4f5256;"></div><svg class="r" style="left:61.00px;top:1090.00px;" width="27" height="23" viewBox="0 0 27 23"><defs><linearGradient id="cl" x1="0" y1="0" x2="0" y2="1"><stop offset="0" stop-color="#dbe6f7"/><stop offset="1" stop-color="#a9c0e6"/></linearGradient><linearGradient id="sn" x1="0" y1="0" x2="1" y2="1"><stop offset="0" stop-color="#ffc54d"/><stop offset="1" stop-color="#f08a1c"/></linearGradient></defs><circle cx="17" cy="8" r="6" fill="url(#sn)"/><path d="M5 21 A4.5 4.5 0 0 1 4 12.5 A7 7 0 0 1 16.5 9.5 A5 5 0 0 1 21 21 Z" fill="url(#cl)"/></svg><div class="t" style="left:94.00px;top:1087.69px;width:800px;font-size:11px;line-height:11px;color:#ffffff;font-weight:400;text-align:left;font-family:'Liberation Sans', sans-serif;">4°C</div><div class="t" style="left:94.00px;top:1102.25px;width:800px;font-size:12.1px;line-height:12.1px;color:#e3e8ee;font-weight:400;text-align:left;font-family:'Liberation Sans', sans-serif;">Stark bewölkt</div><svg class="r" style="left:967.00px;top:1090.00px;" width="25" height="25" viewBox="0 0 25 25"><defs><linearGradient id="wg" x1="0" y1="0" x2="1" y2="1"><stop offset="0" stop-color="#6fdcfa"/><stop offset="1" stop-color="#1a9af0"/></linearGradient></defs><rect x="0.5" y="0.5" width="11" height="11" fill="url(#wg)"/><rect x="12.8" y="0.5" width="11" height="11" fill="url(#wg)"/><rect x="0.5" y="12.8" width="11" height="11" fill="url(#wg)"/><rect x="12.8" y="12.8" width="11" height="11" fill="url(#wg)"/></svg><svg class="r" style="left:1006.00px;top:1084.00px;" width="34" height="32" viewBox="0 0 34 32"><circle cx="14" cy="18" r="12" fill="#d93025"/>
<path d="M14 18 L3.6 12 A12 12 0 0 0 8 28.4 Z" fill="#1e8e3e"/><path d="M14 18 L8 28.4 A12 12 0 0 0 26 18 Z" fill="#1e8e3e"/>
<path d="M14 18 L26 18 A12 12 0 0 1 14 30 L20 19.5 Z" fill="#fbbc04"/><path d="M14 18 L20 19.5 L14 30 A12 12 0 0 1 8 28.4 Z" fill="#1e8e3e"/>
<circle cx="14" cy="18" r="5.5" fill="#fff"/><circle cx="14" cy="18" r="4.3" fill="#1a73e8"/>
<circle cx="23.5" cy="8.5" r="7.5" fill="#dce6fa"/><circle cx="23.5" cy="8.5" r="6" fill="none" stroke="#1a4fb0" stroke-width="1.3"/><circle cx="23.5" cy="7" r="2" fill="none" stroke="#1a4fb0" stroke-width="1.2"/><path d="M19.8 12.3 Q23.5 9.5 27.2 12.3" fill="none" stroke="#1a4fb0" stroke-width="1.2"/></svg><div class="r" style="left:1017.00px;top:1118.00px;width:6.00px;height:3.00px;background:#aab4c0;border-radius:2px;"></div><svg class="r" style="left:1703.00px;top:1095.00px;" width="14" height="10" viewBox="0 0 14 10"><path d="M2 8 L7 3 L12 8" fill="none" stroke="#fff" stroke-width="1.5"/></svg><svg class="r" style="left:1733.00px;top:1092.00px;" width="18" height="18" viewBox="0 0 18 18"><path d="M4.5 14 A3.5 3.5 0 0 1 4 7.2 A5 5 0 0 1 13.5 6.5 A3.7 3.7 0 0 1 14 14 Z" fill="#9aa3ad"/><path d="M2 2 L16 16" stroke="#172a3e" stroke-width="2.6"/><path d="M2 2 L16 16" stroke="#d0d5da" stroke-width="1.2"/></svg><svg class="r" style="left:1764.00px;top:1092.00px;" width="19" height="19" viewBox="0 0 19 19"><path d="M4.5 13.5 A3.5 3.5 0 0 1 4 6.7 A5 5 0 0 1 13.5 6 A3.7 3.7 0 0 1 14 13.5 Z" fill="#3f8ee8"/><circle cx="13.5" cy="13.5" r="4.5" fill="#1f6fd6"/><path d="M13.5 12 V16" stroke="#fff" stroke-width="1.3"/><circle cx="13.5" cy="10.8" r="0.7" fill="#fff"/></svg><svg class="r" style="left:1796.00px;top:1091.00px;" width="20" height="20" viewBox="0 0 20 20"><path d="M15 6 A6.5 6.5 0 0 0 4 6.5 M4.5 14 A6.5 6.5 0 0 0 15.5 13.5" fill="none" stroke="#fff" stroke-width="1.4"/><path d="M15.5 2 V6.5 H11" fill="none" stroke="#fff" stroke-width="1.4"/><path d="M4 18 V13.5 H8.5" fill="none" stroke="#fff" stroke-width="1.4"/><circle cx="15" cy="15" r="3.2" fill="#1f6fd6"/></svg><svg class="r" style="left:1828.00px;top:1091.00px;" width="20" height="20" viewBox="0 0 20 20"><rect x="1.5" y="5" width="12" height="9" fill="none" stroke="#fff" stroke-width="1.3"/><path d="M5 17.5 H11 M8 14 V17.5" stroke="#fff" stroke-width="1.3"/><rect x="12.5" y="1.5" width="5" height="8" fill="#172a3e" stroke="#fff" stroke-width="1.2"/></svg><svg class="r" style="left:1852.00px;top:1092.00px;" width="20" height="18" viewBox="0 0 20 18"><path d="M2 7 H5 L9 3.5 V14.5 L5 11 H2 Z" fill="none" stroke="#fff" stroke-width="1.3" stroke-linejoin="round"/><path d="M11.5 6.5 Q13 9 11.5 11.5 M13.8 4.5 Q16.5 9 13.8 13.5 M16 2.5 Q20 9 16 15.5" fill="none" stroke="#fff" stroke-width="1.3"/></svg><div class="t" style="left:1844.00px;top:1087.68px;width:100px;font-size:11.6px;line-height:11.6px;color:#ffffff;font-weight:400;text-align:right;font-family:'Liberation Sans', sans-serif;">09:19</div><div class="t" style="left:1844.00px;top:1103.18px;width:100px;font-size:11.6px;line-height:11.6px;color:#ffffff;font-weight:400;text-align:right;font-family:'Liberation Sans', sans-serif;">19.11.2025</div></body></html>
